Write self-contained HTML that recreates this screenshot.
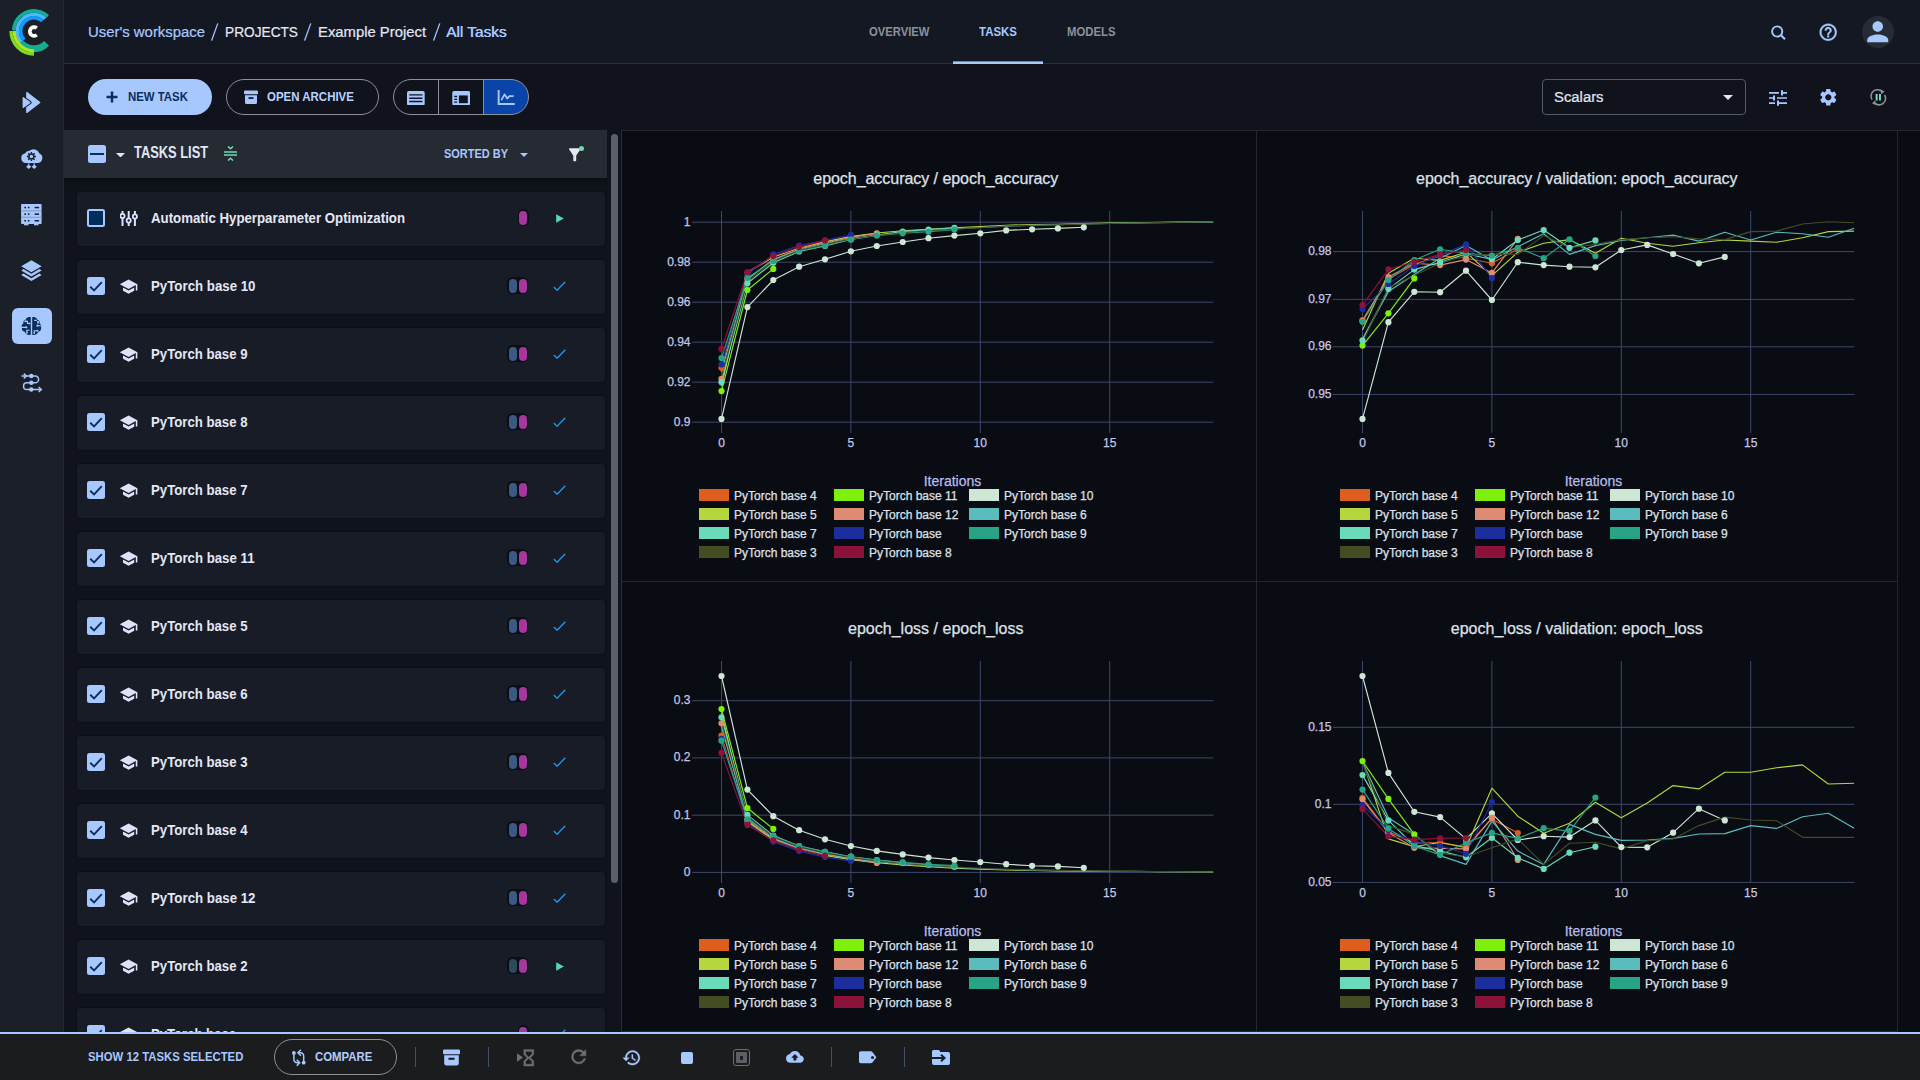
<!DOCTYPE html>
<html><head><meta charset="utf-8"><title>ClearML</title><style>html,body{margin:0;padding:0;background:#10131c;}
body{width:1920px;height:1080px;position:relative;overflow:hidden;font-family:"Liberation Sans",sans-serif;}
.abs{position:absolute;display:block}
.t{position:absolute;white-space:nowrap;}
.sw{position:absolute;width:30px;height:12px}
</style></head><body>
<div class="abs" style="left:64px;top:0px;width:1856px;height:64px;background:#141822"></div>
<div class="abs" style="left:64px;top:63px;width:1856px;height:1px;background:#2a2e39"></div>
<div class="abs" style="left:0px;top:0px;width:64px;height:1080px;background:#1b1f28"></div>
<div class="abs" style="left:63px;top:0px;width:1px;height:1080px;background:#232731"></div>
<div class="abs" style="left:621px;top:130px;width:1299px;height:902px;background:#0a0c14"></div>
<div class="abs" style="left:621px;top:130px;width:1299px;height:1px;background:#242731"></div>
<div class="abs" style="left:621px;top:130px;width:1px;height:902px;background:#2a2d39"></div>
<div class="abs" style="left:1256px;top:130px;width:1px;height:902px;background:#23262f"></div>
<div class="abs" style="left:1897px;top:130px;width:1px;height:902px;background:#23262f"></div>
<div class="abs" style="left:621px;top:581px;width:1276px;height:1px;background:#23262f"></div>
<div class="abs" style="left:621px;top:1031px;width:1276px;height:1px;background:#23262f"></div>
<svg class="abs" style="left:0;top:0" width="64" height="64" viewBox="0 0 64 64"><path d="M47.68 16.33A20.2 20.2 0 0 0 13.71 30.40" stroke="#14ad8f" stroke-width="3.6" fill="none"/><path d="M21.03 43.10A17.6 17.6 0 0 0 46.56 43.33" stroke="#14ad8f" stroke-width="7.0" fill="none"/><path d="M45.07 18.69A16.7 16.7 0 0 0 21.49 42.27" stroke="#4db8ff" stroke-width="3.4" fill="none"/><path d="M42.45 20.91A13.3 13.3 0 0 0 24.02 40.00" stroke="#0f9bff" stroke-width="3.6" fill="none"/><path d="M11.00 31.10A22.9 22.9 0 0 0 33.90 54.00" stroke="#7ddc1f" stroke-width="3.3" fill="none"/><path d="M14.20 31.10A19.7 19.7 0 0 0 33.90 50.80" stroke="#b0e61e" stroke-width="3.2" fill="none"/><path d="M36.75 28.11A4.3 4.3 0 1 0 36.75 34.89" stroke="#ffffff" stroke-width="3.7" fill="none"/></svg>
<svg class="abs" style="left:0;top:64px" width="64" height="360" viewBox="0 64 64 360"><path d="M26.8 92.6L39.8 102.5 26.8 112.4z" fill="#a6c8ff" stroke="#a6c8ff" stroke-width="1.2" stroke-linejoin="round"/><path d="M23.1 97.4L30.3 102.5 23.1 107.7z" fill="#a6c8ff" stroke="#1b1f28" stroke-width="2.800" stroke-linejoin="round" paint-order="stroke"/><path d="M23.1 97.4L30.3 102.5 23.1 107.7z" fill="#a6c8ff" stroke="#a6c8ff" stroke-width="1" stroke-linejoin="round"/><path d="M26 163a4.900 4.900 0 0 1-.800-9.700 4.300 4.300 0 0 1 4.200-2.500 6.400 6.400 0 0 1 10.100 2.700 5 5 0 0 1-2 9.500z" fill="#a6c8ff"/><circle cx="31.400" cy="156.500" r="2.500" fill="#a6c8ff" stroke="#1b1f28" stroke-width="1.500"/><path d="M31.400 152v1.600M31.400 159.400v1.600M26.900 156.500h1.600M34.300 156.500h1.600M28.200 153.300l1.200 1.200M33.400 158.500l1.200 1.200M28.200 159.700l1.200-1.200M33.400 154.500l1.200-1.200" stroke="#1b1f28" stroke-width="1.400"/><path d="M28.700 163.200v1.500M34.200 163.200v1.500" stroke="#a6c8ff" stroke-width="1.200"/><path d="M28.700 164.400l2.600 2.300-2.600 2.300-2.600-2.300zM34.200 164.400l2.600 2.300-2.600 2.300-2.600-2.300z" fill="#a6c8ff"/><rect x="21.100" y="204" width="20.500" height="20" rx="0.800" fill="#a6c8ff"/><path d="M21.100 210.800h20.500M21.100 217.300h20.500" stroke="#7696cf" stroke-width="0.900"/><rect x="24.300" y="206.8" width="1.700" height="1.500" fill="#1b1f28"/><rect x="27.800" y="206.8" width="1.700" height="1.500" fill="#1b1f28"/><rect x="34.600" y="206.8" width="4.500" height="1.500" fill="#1b1f28"/><rect x="24.300" y="213.4" width="1.700" height="1.500" fill="#1b1f28"/><rect x="27.800" y="213.4" width="1.700" height="1.500" fill="#1b1f28"/><rect x="34.600" y="213.4" width="4.500" height="1.500" fill="#1b1f28"/><rect x="24.300" y="220" width="1.700" height="1.500" fill="#1b1f28"/><rect x="27.800" y="220" width="1.700" height="1.500" fill="#1b1f28"/><rect x="34.600" y="220" width="4.500" height="1.500" fill="#1b1f28"/><rect x="24" y="224" width="4.500" height="1.300" fill="#a6c8ff"/><rect x="34" y="224" width="4.500" height="1.300" fill="#a6c8ff"/><path d="M21.200 266.300L31.400 260.200 41.700 266.300 31.400 272.300z" fill="#a6c8ff"/><path d="M21.200 270.500l2.300-1.400 7.900 4.700 7.900-4.700 2.400 1.400-10.300 6.100z" fill="#a6c8ff"/><path d="M21.200 274.900l2.300-1.400 7.900 4.700 7.900-4.700 2.400 1.400-10.300 6.100z" fill="#a6c8ff"/><rect x="12" y="308" width="40" height="36" rx="6" fill="#a6c8ff"/><path d="M30.800 317.300c-2.300-.900-4.500.300-4.900 2.200-1.900.300-3 2.100-2.500 3.900-1.700 1-2.300 2.600-1.400 4.200-.700 2.100.600 4 2.700 4.200.600 2.400 3.700 3.900 6.100 2.900z" fill="#0b2f5c"/><path d="M32.200 317.300c2.300-.900 4.500.300 4.900 2.200 1.900.300 3 2.100 2.500 3.900 1.700 1 2.300 2.600 1.400 4.200.700 2.100-.600 4-2.700 4.200-.600 2.400-3.700 3.900-6.100 2.900z" fill="#0b2f5c"/><path d="M21 327.300h5M25.500 321.300h2v2.200h1.800M26.800 332.500v-2.300h2.600M42 325.700h-4.300M38 322v1.800M36.800 320.300h-2.600M37.200 330.700h-3v2.200" stroke="#a6c8ff" stroke-width="1.150" fill="none"/><g fill="#a6c8ff"><circle cx="26.300" cy="327.300" r="1.100"/><circle cx="25.300" cy="321.300" r="1"/><circle cx="29.500" cy="323.500" r="1"/><circle cx="26.800" cy="332.800" r="1"/><circle cx="37.500" cy="325.700" r="1.100"/><circle cx="38" cy="321.700" r="1"/><circle cx="37.400" cy="330.700" r="1"/><circle cx="34.200" cy="333.100" r="0.900"/></g><path d="M21.500 376h13.700a3.400 3.400 0 0 1 0 6.800h-8.300a3.350 3.350 0 0 0 0 6.700h13.500" stroke="#a6c8ff" stroke-width="1.500" fill="none"/><circle cx="31.300" cy="376" r="2.200" fill="#a6c8ff"/><circle cx="31.300" cy="382.800" r="2.200" fill="#a6c8ff"/><circle cx="31.300" cy="389.500" r="2.200" fill="#a6c8ff"/><path d="M23.800 373.600l2.600 2.400-2.600 2.400M38.700 387.100l2.600 2.400-2.600 2.400" stroke="#a6c8ff" stroke-width="1.500" fill="none"/></svg>
<div class="t" style="left:88px;top:21.0px;font-size:15.5px;line-height:22px;color:#a6c8ff;transform-origin:0 50%;transform:scaleX(0.9604);-webkit-text-stroke:0.22px currentColor;">User's workspace</div>
<svg class="abs" style="left:211.2px;top:22px" width="9" height="20" viewBox="0 0 9 20"><path d="M0.600 18.600L6.800 1.400" stroke="#a3c4fb" stroke-width="1.300"/></svg>
<svg class="abs" style="left:304.2px;top:22px" width="9" height="20" viewBox="0 0 9 20"><path d="M0.600 18.600L6.800 1.400" stroke="#a3c4fb" stroke-width="1.300"/></svg>
<svg class="abs" style="left:432.7px;top:22px" width="9" height="20" viewBox="0 0 9 20"><path d="M0.600 18.600L6.800 1.400" stroke="#a3c4fb" stroke-width="1.300"/></svg>
<div class="t" style="left:225px;top:21.0px;font-size:15.5px;line-height:22px;color:#e2e6f5;transform-origin:0 50%;transform:scaleX(0.8830);-webkit-text-stroke:0.22px currentColor;">PROJECTS</div>
<div class="t" style="left:318px;top:21.0px;font-size:15.5px;line-height:22px;color:#e2e6f5;transform-origin:0 50%;transform:scaleX(0.9570);-webkit-text-stroke:0.22px currentColor;">Example Project</div>
<div class="t" style="left:446px;top:21.0px;font-size:15.5px;line-height:22px;color:#a6c8ff;transform-origin:0 50%;transform:scaleX(0.9939);text-shadow:0.4px 0 0 #a6c8ff;">All Tasks</div>
<div class="t" style="left:868.5px;top:23.5px;font-size:12.2px;line-height:17px;color:#8d9099;font-weight:700;transform-origin:0 50%;transform:scaleX(0.9232);">OVERVIEW</div>
<div class="t" style="left:979px;top:23.5px;font-size:12.2px;line-height:17px;color:#a6c8ff;font-weight:700;transform-origin:0 50%;transform:scaleX(0.9396);">TASKS</div>
<div class="t" style="left:1067px;top:23.5px;font-size:12.2px;line-height:17px;color:#8d9099;font-weight:700;transform-origin:0 50%;transform:scaleX(0.9293);">MODELS</div>
<div class="abs" style="left:953px;top:61px;width:90px;height:1px;background:#6f86ad"></div>
<div class="abs" style="left:953px;top:62px;width:90px;height:2px;background:#a6c8ff"></div>
<svg class="abs" style="left:1770.00px;top:24.00px" width="17" height="17" viewBox="1770 24 17 17" ><circle cx="1777.200" cy="31.500" r="5.100" fill="none" stroke="#a6c8ff" stroke-width="1.900"/><path d="M1781 35.300l4 4" stroke="#a6c8ff" stroke-width="2.100"/></svg>
<svg class="abs" style="left:1817.80px;top:22.20px;" width="20.4" height="20.4" viewBox="0 0 24 24" fill="#a6c8ff" stroke="#a6c8ff" stroke-width="0.450"><path d="M11 18h2v-2h-2v2zm1-16C6.48 2 2 6.48 2 12s4.48 10 10 10 10-4.48 10-10S17.52 2 12 2zm0 18c-4.41 0-8-3.59-8-8s3.59-8 8-8 8 3.59 8 8-3.59 8-8 8zm0-14c-2.21 0-4 1.79-4 4h2c0-1.1.9-2 2-2s2 .9 2 2c0 2-3 1.75-3 5h2c0-2.25 3-2.5 3-5 0-2.21-1.79-4-4-4z"/></svg>
<div class="abs" style="left:1862px;top:16px;width:32px;height:32px;background:#272b35;border-radius:50%"></div>
<svg class="abs" style="left:1862.25px;top:15.75px;" width="31.5" height="31.5" viewBox="0 0 24 24" fill="#a6c8ff" ><path d="M12 12c2.21 0 4-1.79 4-4s-1.79-4-4-4-4 1.79-4 4 1.79 4 4 4zm0 2c-2.67 0-8 1.34-8 4v2h16v-2c0-2.66-5.33-4-8-4z"/></svg>
<div class="abs" style="left:88px;top:79px;width:124px;height:36px;background:#a6c8ff;border-radius:18px"></div>
<svg class="abs" style="left:106.00px;top:91.00px" width="12" height="12" viewBox="0 0 12 12" ><path d="M6 0.500v11M0.500 6h11" stroke="#0b2f5c" stroke-width="2.500"/></svg>
<div class="t" style="left:128px;top:88.5px;font-size:12.2px;line-height:17px;color:#0b2f5c;font-weight:700;transform-origin:0 50%;transform:scaleX(0.9352);">NEW TASK</div>
<div class="abs" style="left:226px;top:79px;width:153px;height:36px;border:1px solid #8e9099;border-radius:18px;box-sizing:border-box"></div>
<svg class="abs" style="left:244.00px;top:90.00px" width="14" height="15" viewBox="0 0 14 15" ><rect x="0" y="0.500" width="14" height="3.800" rx="0.800" fill="#a6c8ff"/><path d="M1 5.200h12v7.300a1.500 1.500 0 0 1-1.500 1.500h-9a1.500 1.500 0 0 1-1.500-1.500z" fill="#a6c8ff"/><rect x="4.500" y="7.200" width="5" height="1.700" fill="#10131c"/></svg>
<div class="t" style="left:267px;top:88.5px;font-size:12.2px;line-height:17px;color:#b9d3ff;font-weight:700;transform-origin:0 50%;transform:scaleX(0.9414);">OPEN ARCHIVE</div>
<div class="abs" style="left:393px;top:79px;width:136px;height:36px;border:1px solid #8e9099;border-radius:18px;box-sizing:border-box;overflow:hidden;background:linear-gradient(90deg,transparent 0 44.500px,#8e9099 44.500px 45.500px,transparent 45.500px 89.500px,#8e9099 89.500px 90.500px,#0b44a8 90.500px)"></div>
<svg class="abs" style="left:407.35px;top:90.60px" width="17.7" height="14.4" viewBox="0 0 16 13" ><rect x="0" y="0" width="16" height="13" rx="1.500" fill="#a6c8ff"/><path d="M2 3.500h12M2 6.500h12M2 9.500h12" stroke="#10131c" stroke-width="1.300"/></svg>
<svg class="abs" style="left:451.75px;top:90.60px" width="18.3" height="14.4" viewBox="0 0 16 13" ><rect x="0" y="0" width="16" height="13" rx="1.500" fill="#a6c8ff"/><rect x="6" y="4" width="8" height="7" fill="#10131c"/><path d="M1.800 5h2.600M1.800 7.500h2.600M1.800 10h2.600" stroke="#10131c" stroke-width="1.200"/></svg>
<svg class="abs" style="left:496.75px;top:90.00px" width="18.3" height="15" viewBox="0 0 16 14" ><path d="M1 0v13h15" stroke="#a6c8ff" stroke-width="1.800" fill="none"/><path d="M3.500 9.500l3-5.500 2.500 4 2-2.300h4" stroke="#a6c8ff" stroke-width="1.600" fill="none" stroke-linejoin="round"/></svg>
<div class="abs" style="left:1542px;top:79px;width:204px;height:36px;border:1px solid #555a66;border-radius:4px;box-sizing:border-box"></div>
<div class="t" style="left:1553.5px;top:86.0px;font-size:15.5px;line-height:22px;color:#e2e6f5;transform-origin:0 50%;transform:scaleX(0.9577);-webkit-text-stroke:0.22px currentColor;">Scalars</div>
<svg class="abs" style="left:1723.00px;top:95.00px" width="10" height="5" viewBox="0 0 10 5" ><path d="M0 0h10L5 5z" fill="#e2e6f5"/></svg>
<svg class="abs" style="left:1766.00px;top:85.70px;transform:scaleY(0.86);" width="24" height="24" viewBox="0 0 24 24" fill="#a6c8ff" ><path d="M3 17v2h6v-2H3zM3 5v2h10V5H3zm10 16v-2h8v-2h-8v-2h-2v6h2zM7 9v2H3v2h4v2h2V9H7zm14 4v-2H11v2h10zm-6-4h2V7h4V5h-4V3h-2v6z"/></svg>
<svg class="abs" style="left:1817.70px;top:87.20px;" width="20.6" height="20.6" viewBox="0 0 24 24" fill="#a6c8ff" ><path d="M19.14 12.94c.04-.3.06-.61.06-.94 0-.32-.02-.64-.07-.94l2.03-1.58c.18-.14.23-.41.12-.61l-1.92-3.32c-.12-.22-.37-.29-.59-.22l-2.39.96c-.5-.38-1.03-.7-1.62-.94l-.36-2.54c-.04-.24-.24-.41-.48-.41h-3.84c-.24 0-.43.17-.47.41l-.36 2.54c-.59.24-1.13.57-1.62.94l-2.39-.96c-.22-.08-.47 0-.59.22L2.74 8.87c-.12.21-.08.47.12.61l2.03 1.58c-.05.3-.09.63-.09.94s.02.64.07.94l-2.03 1.58c-.18.14-.23.41-.12.61l1.92 3.32c.12.22.37.29.59.22l2.39-.96c.5.38 1.03.7 1.62.94l.36 2.54c.05.24.24.41.48.41h3.84c.24 0 .44-.17.47-.41l.36-2.54c.59-.24 1.13-.56 1.62-.94l2.39.96c.22.08.47 0 .59-.22l1.92-3.32c.12-.22.07-.47-.12-.61l-2.01-1.58zM12 15.6c-1.98 0-3.6-1.62-3.6-3.6s1.62-3.6 3.6-3.6 3.6 1.62 3.6 3.6-1.62 3.6-3.6 3.6z"/></svg>
<svg class="abs" style="left:1868.70px;top:87.90px" width="18.6" height="18.6" viewBox="0 0 20 20" ><path d="M3.200 12.500A7 7 0 0 1 14.500 4.300M16.800 7.500A7 7 0 0 1 5.500 15.700" stroke="#8e9099" stroke-width="1.700" fill="none"/><path d="M12.500 1.500l4.300 2.200-3.600 3zM7.500 18.500l-4.300-2.200 3.600-3z" fill="#8e9099"/><path d="M8.200 6.500v7M11.800 6.500v7" stroke="#7fe3c1" stroke-width="2"/></svg>
<div class="abs" style="left:64px;top:130px;width:543px;height:48px;background:#262a33"></div>
<div class="abs" style="left:64px;top:178px;width:543px;height:10px;background:linear-gradient(#0c0e15,#10131c)"></div>
<div class="abs" style="left:88px;top:145px;width:18px;height:18px;background:#a6c8ff;border-radius:2.500px"></div>
<div class="abs" style="left:90px;top:153px;width:14px;height:2.2px;background:#0b2f5c"></div>
<svg class="abs" style="left:115.50px;top:152.75px" width="9" height="4.5" viewBox="0 0 10 5" ><path d="M0 0h10L5 5z" fill="#dce6ff"/></svg>
<div class="t" style="left:133.8px;top:142.2px;font-size:15.7px;line-height:22px;color:#e2e6f5;font-weight:700;transform-origin:0 50%;transform:scaleX(0.8206);">TASKS LIST</div>
<svg class="abs" style="left:224.00px;top:146.00px" width="13" height="15" viewBox="0 0 13 15" ><path d="M0 6h13M0 9h13" stroke="#6fdbb5" stroke-width="1.500"/><path d="M4 0.500l2.500 2.300L9 .500M4 14.500l2.500-2.300 2.500 2.300" stroke="#6fdbb5" stroke-width="1.500" fill="none"/></svg>
<div class="t" style="left:443.5px;top:145.5px;font-size:12.2px;line-height:17px;color:#a6c8ff;font-weight:700;transform-origin:0 50%;transform:scaleX(0.8992);">SORTED BY</div>
<svg class="abs" style="left:519.50px;top:153.00px" width="8" height="4" viewBox="0 0 10 5" ><path d="M0 0h10L5 5z" fill="#a6c8ff"/></svg>
<svg class="abs" style="left:566.25px;top:145.75px;transform:scaleY(1.13);" width="17.5" height="17.5" viewBox="0 0 24 24" fill="#e6e8f0" ><path d="M4.25 5.61C6.27 8.2 10 13 10 13v6c0 .55.45 1 1 1h2c.55 0 1-.45 1-1v-6s3.72-4.8 5.74-7.39A.998.998 0 0018.95 4H5.04c-.83 0-1.3.95-.79 1.61z"/></svg>
<div class="abs" style="left:579px;top:146px;width:5px;height:5px;background:#6fdbb5;border-radius:50%"></div>
<div class="abs" style="left:611px;top:134px;width:6.5px;height:749px;background:#5b5f69;border-radius:3.500px"></div>
<div class="abs" style="left:64px;top:188px;width:548px;height:844px;overflow:hidden"><div class="abs" style="left:-64px;top:-188px;width:700px;height:1100px">
<div class="abs" style="left:76px;top:191.0px;width:530px;height:56px;background:#171c27;border:1px solid #0c0f17;box-sizing:border-box;border-radius:4px"></div>
<div class="abs" style="left:87px;top:209.0px;width:18px;height:18px;border:2px solid #a6c8ff;background:#002d5c;border-radius:2.500px;box-sizing:border-box"></div>
<svg class="abs" style="left:120.30px;top:210.75px" width="17.4" height="15.5" viewBox="0 0 17.400 15.500" ><path d="M2.5 0v15.500" stroke="#dce4ff" stroke-width="2"/><circle cx="2.5" cy="5" r="2.100" fill="#181c26" stroke="#dce4ff" stroke-width="1.800"/><path d="M8.7 0v15.500" stroke="#dce4ff" stroke-width="2"/><circle cx="8.7" cy="9.5" r="2.100" fill="#181c26" stroke="#dce4ff" stroke-width="1.800"/><path d="M14.9 0v15.500" stroke="#dce4ff" stroke-width="2"/><circle cx="14.9" cy="5.5" r="2.100" fill="#181c26" stroke="#dce4ff" stroke-width="1.800"/></svg>
<div class="t" style="left:151px;top:208.0px;font-size:14.5px;line-height:20px;color:#e4e7f6;font-weight:700;transform-origin:0 50%;transform:scaleX(0.9138);">Automatic Hyperparameter Optimization</div>
<div class="abs" style="left:517.5px;top:209.3px;width:11px;height:17.2px;background:#0c0e15;border-radius:5.500px"></div>
<div class="abs" style="left:518.9px;top:210.70000000000002px;width:8.2px;height:14.4px;background:#a5379f;border-radius:4.100px"></div>
<svg class="abs" style="left:555.60px;top:213.50px" width="8" height="9" viewBox="0 0 8 9" ><path d="M0.200 0.300v8.400L7.800 4.500z" fill="#4fdcb0"/></svg>
<div class="abs" style="left:76px;top:259.0px;width:530px;height:56px;background:#171c27;border:1px solid #0c0f17;box-sizing:border-box;border-radius:4px"></div>
<div class="abs" style="left:87px;top:277.0px;width:18px;height:18px;background:#a6c8ff;border-radius:2.500px"></div>
<svg class="abs" style="left:88.90px;top:280.70px" width="14" height="11" viewBox="0 0 14 11" ><path d="M1.200 5.800l3.900 3.600L12.800 1.200" stroke="#0b2f5c" stroke-width="1.900" fill="none"/></svg>
<svg class="abs" style="left:119.10px;top:277.10px;" width="19.2" height="19.2" viewBox="0 0 24 24" fill="#dde2f8" ><path d="M5 13.18v4L12 21l7-3.82v-4L12 17l-7-3.82zM12 3L1 9l11 6 9-4.91V17h2V9L12 3z"/></svg>
<div class="t" style="left:151px;top:276.0px;font-size:14.5px;line-height:20px;color:#e4e7f6;font-weight:700;transform-origin:0 50%;transform:scaleX(0.9153);">PyTorch base 10</div>
<div class="abs" style="left:507.4px;top:277.29999999999995px;width:21.1px;height:17.2px;background:#0c0e15;border-radius:5.500px"></div>
<div class="abs" style="left:508.8px;top:278.7px;width:8.2px;height:14.4px;background:#3b5a82;border-radius:4.100px"></div>
<div class="abs" style="left:518.9px;top:278.7px;width:8.2px;height:14.4px;background:#a5379f;border-radius:4.100px"></div>
<svg class="abs" style="left:553.00px;top:280.50px" width="13" height="10" viewBox="0 0 13 10" ><path d="M0.800 6l3.300 3.200L12.300 0.800" stroke="#1e9bf0" stroke-width="1.300" fill="none"/></svg>
<div class="abs" style="left:76px;top:327.0px;width:530px;height:56px;background:#171c27;border:1px solid #0c0f17;box-sizing:border-box;border-radius:4px"></div>
<div class="abs" style="left:87px;top:345.0px;width:18px;height:18px;background:#a6c8ff;border-radius:2.500px"></div>
<svg class="abs" style="left:88.90px;top:348.70px" width="14" height="11" viewBox="0 0 14 11" ><path d="M1.200 5.800l3.900 3.600L12.800 1.200" stroke="#0b2f5c" stroke-width="1.900" fill="none"/></svg>
<svg class="abs" style="left:119.10px;top:345.10px;" width="19.2" height="19.2" viewBox="0 0 24 24" fill="#dde2f8" ><path d="M5 13.18v4L12 21l7-3.82v-4L12 17l-7-3.82zM12 3L1 9l11 6 9-4.91V17h2V9L12 3z"/></svg>
<div class="t" style="left:151px;top:344.0px;font-size:14.5px;line-height:20px;color:#e4e7f6;font-weight:700;transform-origin:0 50%;transform:scaleX(0.9094);">PyTorch base 9</div>
<div class="abs" style="left:507.4px;top:345.29999999999995px;width:21.1px;height:17.2px;background:#0c0e15;border-radius:5.500px"></div>
<div class="abs" style="left:508.8px;top:346.7px;width:8.2px;height:14.4px;background:#3b5a82;border-radius:4.100px"></div>
<div class="abs" style="left:518.9px;top:346.7px;width:8.2px;height:14.4px;background:#a5379f;border-radius:4.100px"></div>
<svg class="abs" style="left:553.00px;top:348.50px" width="13" height="10" viewBox="0 0 13 10" ><path d="M0.800 6l3.300 3.200L12.300 0.800" stroke="#1e9bf0" stroke-width="1.300" fill="none"/></svg>
<div class="abs" style="left:76px;top:395.0px;width:530px;height:56px;background:#171c27;border:1px solid #0c0f17;box-sizing:border-box;border-radius:4px"></div>
<div class="abs" style="left:87px;top:413.0px;width:18px;height:18px;background:#a6c8ff;border-radius:2.500px"></div>
<svg class="abs" style="left:88.90px;top:416.70px" width="14" height="11" viewBox="0 0 14 11" ><path d="M1.200 5.800l3.900 3.600L12.800 1.200" stroke="#0b2f5c" stroke-width="1.900" fill="none"/></svg>
<svg class="abs" style="left:119.10px;top:413.10px;" width="19.2" height="19.2" viewBox="0 0 24 24" fill="#dde2f8" ><path d="M5 13.18v4L12 21l7-3.82v-4L12 17l-7-3.82zM12 3L1 9l11 6 9-4.91V17h2V9L12 3z"/></svg>
<div class="t" style="left:151px;top:412.0px;font-size:14.5px;line-height:20px;color:#e4e7f6;font-weight:700;transform-origin:0 50%;transform:scaleX(0.9094);">PyTorch base 8</div>
<div class="abs" style="left:507.4px;top:413.29999999999995px;width:21.1px;height:17.2px;background:#0c0e15;border-radius:5.500px"></div>
<div class="abs" style="left:508.8px;top:414.7px;width:8.2px;height:14.4px;background:#3b5a82;border-radius:4.100px"></div>
<div class="abs" style="left:518.9px;top:414.7px;width:8.2px;height:14.4px;background:#a5379f;border-radius:4.100px"></div>
<svg class="abs" style="left:553.00px;top:416.50px" width="13" height="10" viewBox="0 0 13 10" ><path d="M0.800 6l3.300 3.200L12.300 0.800" stroke="#1e9bf0" stroke-width="1.300" fill="none"/></svg>
<div class="abs" style="left:76px;top:463.0px;width:530px;height:56px;background:#171c27;border:1px solid #0c0f17;box-sizing:border-box;border-radius:4px"></div>
<div class="abs" style="left:87px;top:481.0px;width:18px;height:18px;background:#a6c8ff;border-radius:2.500px"></div>
<svg class="abs" style="left:88.90px;top:484.70px" width="14" height="11" viewBox="0 0 14 11" ><path d="M1.200 5.800l3.900 3.600L12.800 1.200" stroke="#0b2f5c" stroke-width="1.900" fill="none"/></svg>
<svg class="abs" style="left:119.10px;top:481.10px;" width="19.2" height="19.2" viewBox="0 0 24 24" fill="#dde2f8" ><path d="M5 13.18v4L12 21l7-3.82v-4L12 17l-7-3.82zM12 3L1 9l11 6 9-4.91V17h2V9L12 3z"/></svg>
<div class="t" style="left:151px;top:480.0px;font-size:14.5px;line-height:20px;color:#e4e7f6;font-weight:700;transform-origin:0 50%;transform:scaleX(0.9094);">PyTorch base 7</div>
<div class="abs" style="left:507.4px;top:481.29999999999995px;width:21.1px;height:17.2px;background:#0c0e15;border-radius:5.500px"></div>
<div class="abs" style="left:508.8px;top:482.7px;width:8.2px;height:14.4px;background:#3b5a82;border-radius:4.100px"></div>
<div class="abs" style="left:518.9px;top:482.7px;width:8.2px;height:14.4px;background:#a5379f;border-radius:4.100px"></div>
<svg class="abs" style="left:553.00px;top:484.50px" width="13" height="10" viewBox="0 0 13 10" ><path d="M0.800 6l3.300 3.200L12.300 0.800" stroke="#1e9bf0" stroke-width="1.300" fill="none"/></svg>
<div class="abs" style="left:76px;top:531.0px;width:530px;height:56px;background:#171c27;border:1px solid #0c0f17;box-sizing:border-box;border-radius:4px"></div>
<div class="abs" style="left:87px;top:549.0px;width:18px;height:18px;background:#a6c8ff;border-radius:2.500px"></div>
<svg class="abs" style="left:88.90px;top:552.70px" width="14" height="11" viewBox="0 0 14 11" ><path d="M1.200 5.800l3.900 3.600L12.800 1.200" stroke="#0b2f5c" stroke-width="1.900" fill="none"/></svg>
<svg class="abs" style="left:119.10px;top:549.10px;" width="19.2" height="19.2" viewBox="0 0 24 24" fill="#dde2f8" ><path d="M5 13.18v4L12 21l7-3.82v-4L12 17l-7-3.82zM12 3L1 9l11 6 9-4.91V17h2V9L12 3z"/></svg>
<div class="t" style="left:151px;top:548.0px;font-size:14.5px;line-height:20px;color:#e4e7f6;font-weight:700;transform-origin:0 50%;transform:scaleX(0.9129);">PyTorch base 11</div>
<div class="abs" style="left:507.4px;top:549.3px;width:21.1px;height:17.2px;background:#0c0e15;border-radius:5.500px"></div>
<div class="abs" style="left:508.8px;top:550.6999999999999px;width:8.2px;height:14.4px;background:#3b5a82;border-radius:4.100px"></div>
<div class="abs" style="left:518.9px;top:550.6999999999999px;width:8.2px;height:14.4px;background:#a5379f;border-radius:4.100px"></div>
<svg class="abs" style="left:553.00px;top:552.50px" width="13" height="10" viewBox="0 0 13 10" ><path d="M0.800 6l3.300 3.200L12.300 0.800" stroke="#1e9bf0" stroke-width="1.300" fill="none"/></svg>
<div class="abs" style="left:76px;top:599.0px;width:530px;height:56px;background:#171c27;border:1px solid #0c0f17;box-sizing:border-box;border-radius:4px"></div>
<div class="abs" style="left:87px;top:617.0px;width:18px;height:18px;background:#a6c8ff;border-radius:2.500px"></div>
<svg class="abs" style="left:88.90px;top:620.70px" width="14" height="11" viewBox="0 0 14 11" ><path d="M1.200 5.800l3.900 3.600L12.800 1.200" stroke="#0b2f5c" stroke-width="1.900" fill="none"/></svg>
<svg class="abs" style="left:119.10px;top:617.10px;" width="19.2" height="19.2" viewBox="0 0 24 24" fill="#dde2f8" ><path d="M5 13.18v4L12 21l7-3.82v-4L12 17l-7-3.82zM12 3L1 9l11 6 9-4.91V17h2V9L12 3z"/></svg>
<div class="t" style="left:151px;top:616.0px;font-size:14.5px;line-height:20px;color:#e4e7f6;font-weight:700;transform-origin:0 50%;transform:scaleX(0.9094);">PyTorch base 5</div>
<div class="abs" style="left:507.4px;top:617.3px;width:21.1px;height:17.2px;background:#0c0e15;border-radius:5.500px"></div>
<div class="abs" style="left:508.8px;top:618.6999999999999px;width:8.2px;height:14.4px;background:#3b5a82;border-radius:4.100px"></div>
<div class="abs" style="left:518.9px;top:618.6999999999999px;width:8.2px;height:14.4px;background:#a5379f;border-radius:4.100px"></div>
<svg class="abs" style="left:553.00px;top:620.50px" width="13" height="10" viewBox="0 0 13 10" ><path d="M0.800 6l3.300 3.200L12.300 0.800" stroke="#1e9bf0" stroke-width="1.300" fill="none"/></svg>
<div class="abs" style="left:76px;top:667.0px;width:530px;height:56px;background:#171c27;border:1px solid #0c0f17;box-sizing:border-box;border-radius:4px"></div>
<div class="abs" style="left:87px;top:685.0px;width:18px;height:18px;background:#a6c8ff;border-radius:2.500px"></div>
<svg class="abs" style="left:88.90px;top:688.70px" width="14" height="11" viewBox="0 0 14 11" ><path d="M1.200 5.800l3.900 3.600L12.800 1.200" stroke="#0b2f5c" stroke-width="1.900" fill="none"/></svg>
<svg class="abs" style="left:119.10px;top:685.10px;" width="19.2" height="19.2" viewBox="0 0 24 24" fill="#dde2f8" ><path d="M5 13.18v4L12 21l7-3.82v-4L12 17l-7-3.82zM12 3L1 9l11 6 9-4.91V17h2V9L12 3z"/></svg>
<div class="t" style="left:151px;top:684.0px;font-size:14.5px;line-height:20px;color:#e4e7f6;font-weight:700;transform-origin:0 50%;transform:scaleX(0.9094);">PyTorch base 6</div>
<div class="abs" style="left:507.4px;top:685.3px;width:21.1px;height:17.2px;background:#0c0e15;border-radius:5.500px"></div>
<div class="abs" style="left:508.8px;top:686.6999999999999px;width:8.2px;height:14.4px;background:#3b5a82;border-radius:4.100px"></div>
<div class="abs" style="left:518.9px;top:686.6999999999999px;width:8.2px;height:14.4px;background:#a5379f;border-radius:4.100px"></div>
<svg class="abs" style="left:553.00px;top:688.50px" width="13" height="10" viewBox="0 0 13 10" ><path d="M0.800 6l3.300 3.200L12.300 0.800" stroke="#1e9bf0" stroke-width="1.300" fill="none"/></svg>
<div class="abs" style="left:76px;top:735.0px;width:530px;height:56px;background:#171c27;border:1px solid #0c0f17;box-sizing:border-box;border-radius:4px"></div>
<div class="abs" style="left:87px;top:753.0px;width:18px;height:18px;background:#a6c8ff;border-radius:2.500px"></div>
<svg class="abs" style="left:88.90px;top:756.70px" width="14" height="11" viewBox="0 0 14 11" ><path d="M1.200 5.800l3.900 3.600L12.800 1.200" stroke="#0b2f5c" stroke-width="1.900" fill="none"/></svg>
<svg class="abs" style="left:119.10px;top:753.10px;" width="19.2" height="19.2" viewBox="0 0 24 24" fill="#dde2f8" ><path d="M5 13.18v4L12 21l7-3.82v-4L12 17l-7-3.82zM12 3L1 9l11 6 9-4.91V17h2V9L12 3z"/></svg>
<div class="t" style="left:151px;top:752.0px;font-size:14.5px;line-height:20px;color:#e4e7f6;font-weight:700;transform-origin:0 50%;transform:scaleX(0.9094);">PyTorch base 3</div>
<div class="abs" style="left:507.4px;top:753.3px;width:21.1px;height:17.2px;background:#0c0e15;border-radius:5.500px"></div>
<div class="abs" style="left:508.8px;top:754.6999999999999px;width:8.2px;height:14.4px;background:#3b5a82;border-radius:4.100px"></div>
<div class="abs" style="left:518.9px;top:754.6999999999999px;width:8.2px;height:14.4px;background:#a5379f;border-radius:4.100px"></div>
<svg class="abs" style="left:553.00px;top:756.50px" width="13" height="10" viewBox="0 0 13 10" ><path d="M0.800 6l3.300 3.200L12.300 0.800" stroke="#1e9bf0" stroke-width="1.300" fill="none"/></svg>
<div class="abs" style="left:76px;top:803.0px;width:530px;height:56px;background:#171c27;border:1px solid #0c0f17;box-sizing:border-box;border-radius:4px"></div>
<div class="abs" style="left:87px;top:821.0px;width:18px;height:18px;background:#a6c8ff;border-radius:2.500px"></div>
<svg class="abs" style="left:88.90px;top:824.70px" width="14" height="11" viewBox="0 0 14 11" ><path d="M1.200 5.800l3.900 3.600L12.800 1.200" stroke="#0b2f5c" stroke-width="1.900" fill="none"/></svg>
<svg class="abs" style="left:119.10px;top:821.10px;" width="19.2" height="19.2" viewBox="0 0 24 24" fill="#dde2f8" ><path d="M5 13.18v4L12 21l7-3.82v-4L12 17l-7-3.82zM12 3L1 9l11 6 9-4.91V17h2V9L12 3z"/></svg>
<div class="t" style="left:151px;top:820.0px;font-size:14.5px;line-height:20px;color:#e4e7f6;font-weight:700;transform-origin:0 50%;transform:scaleX(0.9094);">PyTorch base 4</div>
<div class="abs" style="left:507.4px;top:821.3px;width:21.1px;height:17.2px;background:#0c0e15;border-radius:5.500px"></div>
<div class="abs" style="left:508.8px;top:822.6999999999999px;width:8.2px;height:14.4px;background:#3b5a82;border-radius:4.100px"></div>
<div class="abs" style="left:518.9px;top:822.6999999999999px;width:8.2px;height:14.4px;background:#a5379f;border-radius:4.100px"></div>
<svg class="abs" style="left:553.00px;top:824.50px" width="13" height="10" viewBox="0 0 13 10" ><path d="M0.800 6l3.300 3.200L12.300 0.800" stroke="#1e9bf0" stroke-width="1.300" fill="none"/></svg>
<div class="abs" style="left:76px;top:871.0px;width:530px;height:56px;background:#171c27;border:1px solid #0c0f17;box-sizing:border-box;border-radius:4px"></div>
<div class="abs" style="left:87px;top:889.0px;width:18px;height:18px;background:#a6c8ff;border-radius:2.500px"></div>
<svg class="abs" style="left:88.90px;top:892.70px" width="14" height="11" viewBox="0 0 14 11" ><path d="M1.200 5.800l3.900 3.600L12.800 1.200" stroke="#0b2f5c" stroke-width="1.900" fill="none"/></svg>
<svg class="abs" style="left:119.10px;top:889.10px;" width="19.2" height="19.2" viewBox="0 0 24 24" fill="#dde2f8" ><path d="M5 13.18v4L12 21l7-3.82v-4L12 17l-7-3.82zM12 3L1 9l11 6 9-4.91V17h2V9L12 3z"/></svg>
<div class="t" style="left:151px;top:888.0px;font-size:14.5px;line-height:20px;color:#e4e7f6;font-weight:700;transform-origin:0 50%;transform:scaleX(0.9153);">PyTorch base 12</div>
<div class="abs" style="left:507.4px;top:889.3px;width:21.1px;height:17.2px;background:#0c0e15;border-radius:5.500px"></div>
<div class="abs" style="left:508.8px;top:890.6999999999999px;width:8.2px;height:14.4px;background:#3b5a82;border-radius:4.100px"></div>
<div class="abs" style="left:518.9px;top:890.6999999999999px;width:8.2px;height:14.4px;background:#a5379f;border-radius:4.100px"></div>
<svg class="abs" style="left:553.00px;top:892.50px" width="13" height="10" viewBox="0 0 13 10" ><path d="M0.800 6l3.300 3.200L12.300 0.800" stroke="#1e9bf0" stroke-width="1.300" fill="none"/></svg>
<div class="abs" style="left:76px;top:939.0px;width:530px;height:56px;background:#171c27;border:1px solid #0c0f17;box-sizing:border-box;border-radius:4px"></div>
<div class="abs" style="left:87px;top:957.0px;width:18px;height:18px;background:#a6c8ff;border-radius:2.500px"></div>
<svg class="abs" style="left:88.90px;top:960.70px" width="14" height="11" viewBox="0 0 14 11" ><path d="M1.200 5.800l3.900 3.600L12.800 1.200" stroke="#0b2f5c" stroke-width="1.900" fill="none"/></svg>
<svg class="abs" style="left:119.10px;top:957.10px;" width="19.2" height="19.2" viewBox="0 0 24 24" fill="#dde2f8" ><path d="M5 13.18v4L12 21l7-3.82v-4L12 17l-7-3.82zM12 3L1 9l11 6 9-4.91V17h2V9L12 3z"/></svg>
<div class="t" style="left:151px;top:956.0px;font-size:14.5px;line-height:20px;color:#e4e7f6;font-weight:700;transform-origin:0 50%;transform:scaleX(0.9094);">PyTorch base 2</div>
<div class="abs" style="left:507.4px;top:957.3px;width:21.1px;height:17.2px;background:#0c0e15;border-radius:5.500px"></div>
<div class="abs" style="left:508.8px;top:958.6999999999999px;width:8.2px;height:14.4px;background:#2d4a5c;border-radius:4.100px"></div>
<div class="abs" style="left:518.9px;top:958.6999999999999px;width:8.2px;height:14.4px;background:#a5379f;border-radius:4.100px"></div>
<svg class="abs" style="left:555.60px;top:961.50px" width="8" height="9" viewBox="0 0 8 9" ><path d="M0.200 0.300v8.400L7.800 4.500z" fill="#4fdcb0"/></svg>
<div class="abs" style="left:76px;top:1007.0px;width:530px;height:56px;background:#171c27;border:1px solid #0c0f17;box-sizing:border-box;border-radius:4px"></div>
<div class="abs" style="left:87px;top:1025.0px;width:18px;height:18px;background:#a6c8ff;border-radius:2.500px"></div>
<svg class="abs" style="left:88.90px;top:1028.70px" width="14" height="11" viewBox="0 0 14 11" ><path d="M1.200 5.800l3.900 3.600L12.800 1.200" stroke="#0b2f5c" stroke-width="1.900" fill="none"/></svg>
<svg class="abs" style="left:119.10px;top:1025.10px;" width="19.2" height="19.2" viewBox="0 0 24 24" fill="#dde2f8" ><path d="M5 13.18v4L12 21l7-3.82v-4L12 17l-7-3.82zM12 3L1 9l11 6 9-4.91V17h2V9L12 3z"/></svg>
<div class="t" style="left:151px;top:1024.0px;font-size:14.5px;line-height:20px;color:#e4e7f6;font-weight:700;transform-origin:0 50%;transform:scaleX(0.9041);">PyTorch base</div>
<div class="abs" style="left:517.5px;top:1025.3000000000002px;width:11px;height:17.2px;background:#0c0e15;border-radius:5.500px"></div>
<div class="abs" style="left:518.9px;top:1026.7px;width:8.2px;height:14.4px;background:#a5379f;border-radius:4.100px"></div>
<svg class="abs" style="left:553.00px;top:1028.50px" width="13" height="10" viewBox="0 0 13 10" ><path d="M0.800 6l3.300 3.200L12.300 0.800" stroke="#1e9bf0" stroke-width="1.300" fill="none"/></svg>
</div></div>
<svg class="abs" style="left:0;top:0" width="1920" height="1080" viewBox="0 0 1920 1080"><g stroke="#3f4768" stroke-width="1" fill="none"><path d="M721.5 211V433"/><path d="M850.9 211V433"/><path d="M980.3 211V433"/><path d="M1109.7 211V433"/><path d="M692 222.2H1213.4"/><path d="M692 262.2H1213.4"/><path d="M692 302.2H1213.4"/><path d="M692 342.2H1213.4"/><path d="M692 382.2H1213.4"/><path d="M692 422.2H1213.4"/></g><clipPath id="cl0_0"><rect x="692" y="205" width="521.4000000000001" height="234"/></clipPath><g fill="none" stroke-width="1.15" stroke-linejoin="round" clip-path="url(#cl0_0)"><polyline points="721.5,367.8 747.4,273.0 773.3,257.0 799.1,247.5 825.0,241.5 850.9,236.5 876.8,233.5" stroke="#dd5e1e"/><polyline points="721.5,391.1 747.4,290.0 773.3,268.9" stroke="#7ef00c"/><polyline points="721.5,418.9 747.4,307.1 773.3,280.0 799.1,266.7 825.0,259.3 850.9,251.3 876.8,246.0 902.7,242.0 928.5,238.2 954.4,235.6 980.3,233.3 1006.2,230.4 1032.1,229.3 1057.9,228.4 1083.8,227.3" stroke="#cde6d5"/><polyline points="721.5,386.0 747.4,272.0 773.3,257.0 799.1,248.0 825.0,242.0 850.9,236.5 876.8,233.0 902.7,230.8 928.5,229.3 954.4,227.8 980.3,226.5 1006.2,225.2 1032.1,224.6 1057.9,224.2 1083.8,223.6 1109.7,223.0 1135.6,222.7 1161.5,222.3 1187.3,221.9 1213.2,221.6" stroke="#b5d63c"/><polyline points="721.5,378.9 747.4,279.0 773.3,259.5 799.1,249.0 825.0,243.0 850.9,237.5 876.8,233.3" stroke="#dd8b72"/><polyline points="721.5,372.0 747.4,279.0 773.3,260.0 799.1,250.0 825.0,244.0 850.9,238.5 876.8,235.0 902.7,232.5 928.5,230.5 954.4,229.0 980.3,227.5 1006.2,226.2 1032.1,225.3 1057.9,224.6 1083.8,224.0 1109.7,223.4 1135.6,223.0 1161.5,222.6 1187.3,222.2 1213.2,221.9" stroke="#5abcbc"/><polyline points="721.5,382.2 747.4,283.3 773.3,262.7 799.1,251.5 825.0,246.0 850.9,239.5 876.8,235.0 902.7,231.5 928.5,229.5 954.4,227.8" stroke="#6adbb8"/><polyline points="721.5,364.4 747.4,274.4 773.3,254.4 799.1,245.6 825.0,240.4 850.9,234.9" stroke="#1c2d9e"/><polyline points="721.5,358.0 747.4,277.8 773.3,261.0 799.1,250.7 825.0,245.6 850.9,239.3 876.8,235.6 902.7,233.3 928.5,231.8 954.4,229.6" stroke="#27a385"/><polyline points="721.5,377.0 747.4,281.0 773.3,261.0 799.1,250.5 825.0,244.5 850.9,239.0 876.8,235.5 902.7,232.8 928.5,230.8 954.4,229.2 980.3,227.8 1006.2,226.0 1032.1,225.2 1057.9,224.7 1083.8,224.1 1109.7,223.5 1135.6,223.0 1161.5,222.5 1187.3,222.1 1213.2,221.8" stroke="#424d24"/><polyline points="721.5,348.9 747.4,272.2 773.3,256.0 799.1,247.1 825.0,240.4" stroke="#8c1239"/></g><g fill="#dd5e1e"><circle cx="721.5" cy="367.8" r="3.1"/><circle cx="747.4" cy="273.0" r="3.1"/><circle cx="773.3" cy="257.0" r="3.1"/><circle cx="799.1" cy="247.5" r="3.1"/><circle cx="825.0" cy="241.5" r="3.1"/><circle cx="850.9" cy="236.5" r="3.1"/><circle cx="876.8" cy="233.5" r="3.1"/></g><g fill="#7ef00c"><circle cx="721.5" cy="391.1" r="3.1"/><circle cx="747.4" cy="290.0" r="3.1"/><circle cx="773.3" cy="268.9" r="3.1"/></g><g fill="#cde6d5"><circle cx="721.5" cy="418.9" r="3.1"/><circle cx="747.4" cy="307.1" r="3.1"/><circle cx="773.3" cy="280.0" r="3.1"/><circle cx="799.1" cy="266.7" r="3.1"/><circle cx="825.0" cy="259.3" r="3.1"/><circle cx="850.9" cy="251.3" r="3.1"/><circle cx="876.8" cy="246.0" r="3.1"/><circle cx="902.7" cy="242.0" r="3.1"/><circle cx="928.5" cy="238.2" r="3.1"/><circle cx="954.4" cy="235.6" r="3.1"/><circle cx="980.3" cy="233.3" r="3.1"/><circle cx="1006.2" cy="230.4" r="3.1"/><circle cx="1032.1" cy="229.3" r="3.1"/><circle cx="1057.9" cy="228.4" r="3.1"/><circle cx="1083.8" cy="227.3" r="3.1"/></g><g fill="#dd8b72"><circle cx="721.5" cy="378.9" r="3.1"/><circle cx="747.4" cy="279.0" r="3.1"/><circle cx="773.3" cy="259.5" r="3.1"/><circle cx="799.1" cy="249.0" r="3.1"/><circle cx="825.0" cy="243.0" r="3.1"/><circle cx="850.9" cy="237.5" r="3.1"/><circle cx="876.8" cy="233.3" r="3.1"/></g><g fill="#6adbb8"><circle cx="721.5" cy="382.2" r="3.1"/><circle cx="747.4" cy="283.3" r="3.1"/><circle cx="773.3" cy="262.7" r="3.1"/><circle cx="799.1" cy="251.5" r="3.1"/><circle cx="825.0" cy="246.0" r="3.1"/><circle cx="850.9" cy="239.5" r="3.1"/><circle cx="876.8" cy="235.0" r="3.1"/><circle cx="902.7" cy="231.5" r="3.1"/><circle cx="928.5" cy="229.5" r="3.1"/><circle cx="954.4" cy="227.8" r="3.1"/></g><g fill="#1c2d9e"><circle cx="721.5" cy="364.4" r="3.1"/><circle cx="747.4" cy="274.4" r="3.1"/><circle cx="773.3" cy="254.4" r="3.1"/><circle cx="799.1" cy="245.6" r="3.1"/><circle cx="825.0" cy="240.4" r="3.1"/><circle cx="850.9" cy="234.9" r="3.1"/></g><g fill="#27a385"><circle cx="721.5" cy="358.0" r="3.1"/><circle cx="747.4" cy="277.8" r="3.1"/><circle cx="773.3" cy="261.0" r="3.1"/><circle cx="799.1" cy="250.7" r="3.1"/><circle cx="825.0" cy="245.6" r="3.1"/><circle cx="850.9" cy="239.3" r="3.1"/><circle cx="876.8" cy="235.6" r="3.1"/><circle cx="902.7" cy="233.3" r="3.1"/><circle cx="928.5" cy="231.8" r="3.1"/><circle cx="954.4" cy="229.6" r="3.1"/></g><g fill="#8c1239"><circle cx="721.5" cy="348.9" r="3.1"/><circle cx="747.4" cy="272.2" r="3.1"/><circle cx="773.3" cy="256.0" r="3.1"/><circle cx="799.1" cy="247.1" r="3.1"/><circle cx="825.0" cy="240.4" r="3.1"/></g><g stroke="#3f4768" stroke-width="1" fill="none"><path d="M1362.5 211V433"/><path d="M1491.9 211V433"/><path d="M1621.3 211V433"/><path d="M1750.7 211V433"/><path d="M1333 251.6H1854.4"/><path d="M1333 299.4H1854.4"/><path d="M1333 346.8H1854.4"/><path d="M1333 394.4H1854.4"/></g><clipPath id="cl641_0"><rect x="1333" y="205" width="521.4000000000001" height="234"/></clipPath><g fill="none" stroke-width="1.15" stroke-linejoin="round" clip-path="url(#cl641_0)"><polyline points="1362.5,320.0 1388.4,278.9 1414.3,264.4 1440.1,255.6 1466.0,258.2 1491.9,263.3 1517.8,249.0" stroke="#dd5e1e"/><polyline points="1362.5,345.6 1388.4,313.3 1414.3,278.4" stroke="#7ef00c"/><polyline points="1362.5,418.9 1388.4,322.2 1414.3,291.8 1440.1,292.2 1466.0,270.7 1491.9,300.0 1517.8,262.2 1543.7,265.1 1569.5,266.7 1595.4,267.3 1621.3,250.0 1647.2,244.9 1673.1,254.0 1698.9,263.3 1724.8,256.9" stroke="#cde6d5"/><polyline points="1362.5,330.0 1388.4,273.3 1414.3,258.2 1440.1,260.4 1466.0,252.2 1491.9,275.6 1517.8,252.2 1543.7,243.3 1569.5,239.6 1595.4,253.3 1621.3,238.2 1647.2,243.3 1673.1,246.2 1698.9,242.7 1724.8,240.0 1750.7,241.1 1776.6,242.2 1802.5,237.8 1828.3,231.6 1854.2,231.1" stroke="#b5d63c"/><polyline points="1362.5,321.0 1388.4,277.1 1414.3,263.3 1440.1,265.1 1466.0,259.6 1491.9,272.9 1517.8,238.9" stroke="#dd8b72"/><polyline points="1362.5,338.9 1388.4,291.6 1414.3,274.4 1440.1,258.2 1466.0,245.6 1491.9,260.0 1517.8,246.7 1543.7,233.8 1569.5,254.4 1595.4,245.6 1621.3,240.4 1647.2,237.8 1673.1,235.1 1698.9,241.1 1724.8,232.2 1750.7,240.0 1776.6,232.2 1802.5,233.8 1828.3,237.3 1854.2,228.2" stroke="#5abcbc"/><polyline points="1362.5,340.4 1388.4,288.9 1414.3,269.6 1440.1,262.2 1466.0,254.0 1491.9,259.3 1517.8,240.0 1543.7,230.0 1569.5,247.8 1595.4,240.4" stroke="#6adbb8"/><polyline points="1362.5,308.9 1388.4,284.0 1414.3,266.0 1440.1,255.1 1466.0,244.4 1491.9,278.2" stroke="#1c2d9e"/><polyline points="1362.5,321.8 1388.4,280.0 1414.3,260.0 1440.1,249.3 1466.0,253.3 1491.9,255.6 1517.8,247.8 1543.7,258.2 1569.5,239.3 1595.4,256.0" stroke="#27a385"/><polyline points="1362.5,342.2 1388.4,287.8 1414.3,275.6 1440.1,263.3 1466.0,255.6 1491.9,254.4 1517.8,254.4 1543.7,235.6 1569.5,247.8 1595.4,244.4 1621.3,239.6 1647.2,237.8 1673.1,236.7 1698.9,238.9 1724.8,239.6 1750.7,231.6 1776.6,231.1 1802.5,224.0 1828.3,221.8 1854.2,222.7" stroke="#424d24"/><polyline points="1362.5,305.1 1388.4,269.3 1414.3,261.8 1440.1,254.4 1466.0,250.0" stroke="#8c1239"/></g><g fill="#dd5e1e"><circle cx="1362.5" cy="320.0" r="3.1"/><circle cx="1388.4" cy="278.9" r="3.1"/><circle cx="1414.3" cy="264.4" r="3.1"/><circle cx="1440.1" cy="255.6" r="3.1"/><circle cx="1466.0" cy="258.2" r="3.1"/><circle cx="1491.9" cy="263.3" r="3.1"/><circle cx="1517.8" cy="249.0" r="3.1"/></g><g fill="#7ef00c"><circle cx="1362.5" cy="345.6" r="3.1"/><circle cx="1388.4" cy="313.3" r="3.1"/><circle cx="1414.3" cy="278.4" r="3.1"/></g><g fill="#cde6d5"><circle cx="1362.5" cy="418.9" r="3.1"/><circle cx="1388.4" cy="322.2" r="3.1"/><circle cx="1414.3" cy="291.8" r="3.1"/><circle cx="1440.1" cy="292.2" r="3.1"/><circle cx="1466.0" cy="270.7" r="3.1"/><circle cx="1491.9" cy="300.0" r="3.1"/><circle cx="1517.8" cy="262.2" r="3.1"/><circle cx="1543.7" cy="265.1" r="3.1"/><circle cx="1569.5" cy="266.7" r="3.1"/><circle cx="1595.4" cy="267.3" r="3.1"/><circle cx="1621.3" cy="250.0" r="3.1"/><circle cx="1647.2" cy="244.9" r="3.1"/><circle cx="1673.1" cy="254.0" r="3.1"/><circle cx="1698.9" cy="263.3" r="3.1"/><circle cx="1724.8" cy="256.9" r="3.1"/></g><g fill="#dd8b72"><circle cx="1362.5" cy="321.0" r="3.1"/><circle cx="1388.4" cy="277.1" r="3.1"/><circle cx="1414.3" cy="263.3" r="3.1"/><circle cx="1440.1" cy="265.1" r="3.1"/><circle cx="1466.0" cy="259.6" r="3.1"/><circle cx="1491.9" cy="272.9" r="3.1"/><circle cx="1517.8" cy="238.9" r="3.1"/></g><g fill="#6adbb8"><circle cx="1362.5" cy="340.4" r="3.1"/><circle cx="1388.4" cy="288.9" r="3.1"/><circle cx="1414.3" cy="269.6" r="3.1"/><circle cx="1440.1" cy="262.2" r="3.1"/><circle cx="1466.0" cy="254.0" r="3.1"/><circle cx="1491.9" cy="259.3" r="3.1"/><circle cx="1517.8" cy="240.0" r="3.1"/><circle cx="1543.7" cy="230.0" r="3.1"/><circle cx="1569.5" cy="247.8" r="3.1"/><circle cx="1595.4" cy="240.4" r="3.1"/></g><g fill="#1c2d9e"><circle cx="1362.5" cy="308.9" r="3.1"/><circle cx="1388.4" cy="284.0" r="3.1"/><circle cx="1414.3" cy="266.0" r="3.1"/><circle cx="1440.1" cy="255.1" r="3.1"/><circle cx="1466.0" cy="244.4" r="3.1"/><circle cx="1491.9" cy="278.2" r="3.1"/></g><g fill="#27a385"><circle cx="1362.5" cy="321.8" r="3.1"/><circle cx="1388.4" cy="280.0" r="3.1"/><circle cx="1414.3" cy="260.0" r="3.1"/><circle cx="1440.1" cy="249.3" r="3.1"/><circle cx="1466.0" cy="253.3" r="3.1"/><circle cx="1491.9" cy="255.6" r="3.1"/><circle cx="1517.8" cy="247.8" r="3.1"/><circle cx="1543.7" cy="258.2" r="3.1"/><circle cx="1569.5" cy="239.3" r="3.1"/><circle cx="1595.4" cy="256.0" r="3.1"/></g><g fill="#8c1239"><circle cx="1362.5" cy="305.1" r="3.1"/><circle cx="1388.4" cy="269.3" r="3.1"/><circle cx="1414.3" cy="261.8" r="3.1"/><circle cx="1440.1" cy="254.4" r="3.1"/><circle cx="1466.0" cy="250.0" r="3.1"/></g><g stroke="#3f4768" stroke-width="1" fill="none"><path d="M721.5 661V883"/><path d="M850.9 661V883"/><path d="M980.3 661V883"/><path d="M1109.7 661V883"/><path d="M692 700.7H1213.4"/><path d="M692 757.9H1213.4"/><path d="M692 815.2H1213.4"/><path d="M692 872.4H1213.4"/></g><clipPath id="cl0_450"><rect x="692" y="655" width="521.4000000000001" height="234"/></clipPath><g fill="none" stroke-width="1.15" stroke-linejoin="round" clip-path="url(#cl0_450)"><polyline points="721.5,735.6 747.4,822.2 773.3,840.0 799.1,849.3 825.0,854.9 850.9,859.3 876.8,862.2" stroke="#dd5e1e"/><polyline points="721.5,709.1 747.4,808.0 773.3,828.9" stroke="#7ef00c"/><polyline points="721.5,676.0 747.4,789.6 773.3,816.2 799.1,830.2 825.0,839.3 850.9,846.0 876.8,850.9 902.7,854.4 928.5,857.6 954.4,860.0 980.3,862.0 1006.2,864.2 1032.1,865.8 1057.9,866.4 1083.8,867.8" stroke="#cde6d5"/><polyline points="721.5,713.0 747.4,821.0 773.3,840.0 799.1,849.5 825.0,855.5 850.9,859.8 876.8,862.6 902.7,865.0 928.5,866.8 954.4,868.2 980.3,869.2 1006.2,870.0 1032.1,870.5 1057.9,870.9 1083.8,871.3 1109.7,871.5 1135.6,871.3 1161.5,871.7 1187.3,872.0 1213.2,872.1" stroke="#b5d63c"/><polyline points="721.5,723.3 747.4,820.0 773.3,838.9 799.1,848.4 825.0,854.0 850.9,858.9 876.8,862.9" stroke="#dd8b72"/><polyline points="721.5,727.0 747.4,818.0 773.3,838.0 799.1,848.0 825.0,854.0 850.9,858.5 876.8,861.5 902.7,864.0 928.5,866.0 954.4,867.5 980.3,868.7 1006.2,869.5 1032.1,870.1 1057.9,870.6 1083.8,871.0 1109.7,871.3 1135.6,871.5 1161.5,871.7 1187.3,871.9 1213.2,872.0" stroke="#5abcbc"/><polyline points="721.5,717.3 747.4,814.9 773.3,835.6 799.1,846.0 825.0,851.8 850.9,856.7 876.8,860.0 902.7,862.9 928.5,864.9 954.4,866.7" stroke="#6adbb8"/><polyline points="721.5,738.9 747.4,823.3 773.3,841.6 799.1,851.1 825.0,857.1 850.9,861.1" stroke="#1c2d9e"/><polyline points="721.5,740.7 747.4,819.3 773.3,836.2 799.1,846.0 825.0,851.8 850.9,856.7 876.8,860.0 902.7,862.2 928.5,864.4 954.4,865.6" stroke="#27a385"/><polyline points="721.5,722.0 747.4,816.0 773.3,837.0 799.1,847.0 825.0,853.0 850.9,857.5 876.8,861.0 902.7,863.5 928.5,865.5 954.4,867.0 980.3,868.3 1006.2,869.2 1032.1,869.9 1057.9,870.4 1083.8,870.8 1109.7,871.1 1135.6,871.4 1161.5,871.6 1187.3,871.8 1213.2,872.0" stroke="#424d24"/><polyline points="721.5,752.9 747.4,825.1 773.3,840.4 799.1,849.6 825.0,855.6" stroke="#8c1239"/></g><g fill="#dd5e1e"><circle cx="721.5" cy="735.6" r="3.1"/><circle cx="747.4" cy="822.2" r="3.1"/><circle cx="773.3" cy="840.0" r="3.1"/><circle cx="799.1" cy="849.3" r="3.1"/><circle cx="825.0" cy="854.9" r="3.1"/><circle cx="850.9" cy="859.3" r="3.1"/><circle cx="876.8" cy="862.2" r="3.1"/></g><g fill="#7ef00c"><circle cx="721.5" cy="709.1" r="3.1"/><circle cx="747.4" cy="808.0" r="3.1"/><circle cx="773.3" cy="828.9" r="3.1"/></g><g fill="#cde6d5"><circle cx="721.5" cy="676.0" r="3.1"/><circle cx="747.4" cy="789.6" r="3.1"/><circle cx="773.3" cy="816.2" r="3.1"/><circle cx="799.1" cy="830.2" r="3.1"/><circle cx="825.0" cy="839.3" r="3.1"/><circle cx="850.9" cy="846.0" r="3.1"/><circle cx="876.8" cy="850.9" r="3.1"/><circle cx="902.7" cy="854.4" r="3.1"/><circle cx="928.5" cy="857.6" r="3.1"/><circle cx="954.4" cy="860.0" r="3.1"/><circle cx="980.3" cy="862.0" r="3.1"/><circle cx="1006.2" cy="864.2" r="3.1"/><circle cx="1032.1" cy="865.8" r="3.1"/><circle cx="1057.9" cy="866.4" r="3.1"/><circle cx="1083.8" cy="867.8" r="3.1"/></g><g fill="#dd8b72"><circle cx="721.5" cy="723.3" r="3.1"/><circle cx="747.4" cy="820.0" r="3.1"/><circle cx="773.3" cy="838.9" r="3.1"/><circle cx="799.1" cy="848.4" r="3.1"/><circle cx="825.0" cy="854.0" r="3.1"/><circle cx="850.9" cy="858.9" r="3.1"/><circle cx="876.8" cy="862.9" r="3.1"/></g><g fill="#6adbb8"><circle cx="721.5" cy="717.3" r="3.1"/><circle cx="747.4" cy="814.9" r="3.1"/><circle cx="773.3" cy="835.6" r="3.1"/><circle cx="799.1" cy="846.0" r="3.1"/><circle cx="825.0" cy="851.8" r="3.1"/><circle cx="850.9" cy="856.7" r="3.1"/><circle cx="876.8" cy="860.0" r="3.1"/><circle cx="902.7" cy="862.9" r="3.1"/><circle cx="928.5" cy="864.9" r="3.1"/><circle cx="954.4" cy="866.7" r="3.1"/></g><g fill="#1c2d9e"><circle cx="721.5" cy="738.9" r="3.1"/><circle cx="747.4" cy="823.3" r="3.1"/><circle cx="773.3" cy="841.6" r="3.1"/><circle cx="799.1" cy="851.1" r="3.1"/><circle cx="825.0" cy="857.1" r="3.1"/><circle cx="850.9" cy="861.1" r="3.1"/></g><g fill="#27a385"><circle cx="721.5" cy="740.7" r="3.1"/><circle cx="747.4" cy="819.3" r="3.1"/><circle cx="773.3" cy="836.2" r="3.1"/><circle cx="799.1" cy="846.0" r="3.1"/><circle cx="825.0" cy="851.8" r="3.1"/><circle cx="850.9" cy="856.7" r="3.1"/><circle cx="876.8" cy="860.0" r="3.1"/><circle cx="902.7" cy="862.2" r="3.1"/><circle cx="928.5" cy="864.4" r="3.1"/><circle cx="954.4" cy="865.6" r="3.1"/></g><g fill="#8c1239"><circle cx="721.5" cy="752.9" r="3.1"/><circle cx="747.4" cy="825.1" r="3.1"/><circle cx="773.3" cy="840.4" r="3.1"/><circle cx="799.1" cy="849.6" r="3.1"/><circle cx="825.0" cy="855.6" r="3.1"/></g><g stroke="#3f4768" stroke-width="1" fill="none"><path d="M1362.5 661V883"/><path d="M1491.9 661V883"/><path d="M1621.3 661V883"/><path d="M1750.7 661V883"/><path d="M1333 727.3H1854.4"/><path d="M1333 804.3H1854.4"/><path d="M1333 882.4H1854.4"/></g><clipPath id="cl641_450"><rect x="1333" y="655" width="521.4000000000001" height="234"/></clipPath><g fill="none" stroke-width="1.15" stroke-linejoin="round" clip-path="url(#cl641_450)"><polyline points="1362.5,797.8 1388.4,831.8 1414.3,842.9 1440.1,842.9 1466.0,846.7 1491.9,818.9 1517.8,833.1" stroke="#dd5e1e"/><polyline points="1362.5,761.1 1388.4,798.9 1414.3,834.4" stroke="#7ef00c"/><polyline points="1362.5,676.0 1388.4,772.9 1414.3,811.8 1440.1,817.1 1466.0,838.9 1491.9,813.3 1517.8,840.0 1543.7,836.2 1569.5,837.1 1595.4,820.4 1621.3,847.1 1647.2,847.3 1673.1,832.7 1698.9,808.7 1724.8,820.4" stroke="#cde6d5"/><polyline points="1362.5,761.1 1388.4,838.9 1414.3,846.7 1440.1,842.2 1466.0,847.8 1491.9,788.2 1517.8,816.2 1543.7,833.3 1569.5,823.3 1595.4,802.2 1621.3,817.8 1647.2,802.9 1673.1,785.6 1698.9,788.9 1724.8,772.2 1750.7,772.2 1776.6,767.8 1802.5,764.9 1828.3,784.0 1854.2,783.3" stroke="#b5d63c"/><polyline points="1362.5,799.3 1388.4,832.7 1414.3,847.8 1440.1,848.4 1466.0,848.9 1491.9,817.8 1517.8,860.0" stroke="#dd8b72"/><polyline points="1362.5,762.2 1388.4,817.8 1414.3,834.4 1440.1,855.6 1466.0,864.4 1491.9,821.1 1517.8,851.1 1543.7,864.4 1569.5,824.4 1595.4,834.4 1621.3,840.4 1647.2,840.0 1673.1,838.4 1698.9,834.0 1724.8,833.6 1750.7,825.6 1776.6,828.4 1802.5,816.7 1828.3,813.3 1854.2,828.2" stroke="#5abcbc"/><polyline points="1362.5,775.1 1388.4,820.4 1414.3,845.6 1440.1,851.1 1466.0,857.3 1491.9,837.8 1517.8,857.8 1543.7,868.9 1569.5,852.7 1595.4,846.7" stroke="#6adbb8"/><polyline points="1362.5,805.1 1388.4,830.0 1414.3,841.1 1440.1,846.0 1466.0,853.8 1491.9,802.2" stroke="#1c2d9e"/><polyline points="1362.5,789.6 1388.4,828.4 1414.3,846.0 1440.1,854.9 1466.0,842.7 1491.9,832.9 1517.8,838.4 1543.7,828.2 1569.5,831.1 1595.4,797.6" stroke="#27a385"/><polyline points="1362.5,763.3 1388.4,825.6 1414.3,834.4 1440.1,853.3 1466.0,856.7 1491.9,847.8 1517.8,838.9 1543.7,864.4 1569.5,843.3 1595.4,842.2 1621.3,848.9 1647.2,840.7 1673.1,838.9 1698.9,825.6 1724.8,817.1 1750.7,820.0 1776.6,820.7 1802.5,837.3 1828.3,837.3 1854.2,837.3" stroke="#424d24"/><polyline points="1362.5,809.1 1388.4,836.2 1414.3,839.6 1440.1,838.4 1466.0,838.0" stroke="#8c1239"/></g><g fill="#dd5e1e"><circle cx="1362.5" cy="797.8" r="3.1"/><circle cx="1388.4" cy="831.8" r="3.1"/><circle cx="1414.3" cy="842.9" r="3.1"/><circle cx="1440.1" cy="842.9" r="3.1"/><circle cx="1466.0" cy="846.7" r="3.1"/><circle cx="1491.9" cy="818.9" r="3.1"/><circle cx="1517.8" cy="833.1" r="3.1"/></g><g fill="#7ef00c"><circle cx="1362.5" cy="761.1" r="3.1"/><circle cx="1388.4" cy="798.9" r="3.1"/><circle cx="1414.3" cy="834.4" r="3.1"/></g><g fill="#cde6d5"><circle cx="1362.5" cy="676.0" r="3.1"/><circle cx="1388.4" cy="772.9" r="3.1"/><circle cx="1414.3" cy="811.8" r="3.1"/><circle cx="1440.1" cy="817.1" r="3.1"/><circle cx="1466.0" cy="838.9" r="3.1"/><circle cx="1491.9" cy="813.3" r="3.1"/><circle cx="1517.8" cy="840.0" r="3.1"/><circle cx="1543.7" cy="836.2" r="3.1"/><circle cx="1569.5" cy="837.1" r="3.1"/><circle cx="1595.4" cy="820.4" r="3.1"/><circle cx="1621.3" cy="847.1" r="3.1"/><circle cx="1647.2" cy="847.3" r="3.1"/><circle cx="1673.1" cy="832.7" r="3.1"/><circle cx="1698.9" cy="808.7" r="3.1"/><circle cx="1724.8" cy="820.4" r="3.1"/></g><g fill="#dd8b72"><circle cx="1362.5" cy="799.3" r="3.1"/><circle cx="1388.4" cy="832.7" r="3.1"/><circle cx="1414.3" cy="847.8" r="3.1"/><circle cx="1440.1" cy="848.4" r="3.1"/><circle cx="1466.0" cy="848.9" r="3.1"/><circle cx="1491.9" cy="817.8" r="3.1"/><circle cx="1517.8" cy="860.0" r="3.1"/></g><g fill="#6adbb8"><circle cx="1362.5" cy="775.1" r="3.1"/><circle cx="1388.4" cy="820.4" r="3.1"/><circle cx="1414.3" cy="845.6" r="3.1"/><circle cx="1440.1" cy="851.1" r="3.1"/><circle cx="1466.0" cy="857.3" r="3.1"/><circle cx="1491.9" cy="837.8" r="3.1"/><circle cx="1517.8" cy="857.8" r="3.1"/><circle cx="1543.7" cy="868.9" r="3.1"/><circle cx="1569.5" cy="852.7" r="3.1"/><circle cx="1595.4" cy="846.7" r="3.1"/></g><g fill="#1c2d9e"><circle cx="1362.5" cy="805.1" r="3.1"/><circle cx="1388.4" cy="830.0" r="3.1"/><circle cx="1414.3" cy="841.1" r="3.1"/><circle cx="1440.1" cy="846.0" r="3.1"/><circle cx="1466.0" cy="853.8" r="3.1"/><circle cx="1491.9" cy="802.2" r="3.1"/></g><g fill="#27a385"><circle cx="1362.5" cy="789.6" r="3.1"/><circle cx="1388.4" cy="828.4" r="3.1"/><circle cx="1414.3" cy="846.0" r="3.1"/><circle cx="1440.1" cy="854.9" r="3.1"/><circle cx="1466.0" cy="842.7" r="3.1"/><circle cx="1491.9" cy="832.9" r="3.1"/><circle cx="1517.8" cy="838.4" r="3.1"/><circle cx="1543.7" cy="828.2" r="3.1"/><circle cx="1569.5" cy="831.1" r="3.1"/><circle cx="1595.4" cy="797.6" r="3.1"/></g><g fill="#8c1239"><circle cx="1362.5" cy="809.1" r="3.1"/><circle cx="1388.4" cy="836.2" r="3.1"/><circle cx="1414.3" cy="839.6" r="3.1"/><circle cx="1440.1" cy="838.4" r="3.1"/><circle cx="1466.0" cy="838.0" r="3.1"/></g></svg><div class="t" style="left:635.8px;width:600px;text-align:center;top:167.5px;font-size:16px;line-height:22px;color:#dfe1ea;letter-spacing:-0.044px;-webkit-text-stroke:0.25px currentColor;">epoch_accuracy / epoch_accuracy</div><div class="t" style="right:1229.5px;top:213.7px;font-size:12px;line-height:17px;color:#c3c7e6;-webkit-text-stroke:0.25px currentColor;">1</div><div class="t" style="right:1229.5px;top:253.7px;font-size:12px;line-height:17px;color:#c3c7e6;-webkit-text-stroke:0.25px currentColor;">0.98</div><div class="t" style="right:1229.5px;top:293.7px;font-size:12px;line-height:17px;color:#c3c7e6;-webkit-text-stroke:0.25px currentColor;">0.96</div><div class="t" style="right:1229.5px;top:333.7px;font-size:12px;line-height:17px;color:#c3c7e6;-webkit-text-stroke:0.25px currentColor;">0.94</div><div class="t" style="right:1229.5px;top:373.7px;font-size:12px;line-height:17px;color:#c3c7e6;-webkit-text-stroke:0.25px currentColor;">0.92</div><div class="t" style="right:1229.5px;top:413.7px;font-size:12px;line-height:17px;color:#c3c7e6;-webkit-text-stroke:0.25px currentColor;">0.9</div><div class="t" style="left:421.5px;width:600px;text-align:center;top:434.5px;font-size:12px;line-height:17px;color:#c3c7e6;-webkit-text-stroke:0.25px currentColor;">0</div><div class="t" style="left:550.9px;width:600px;text-align:center;top:434.5px;font-size:12px;line-height:17px;color:#c3c7e6;-webkit-text-stroke:0.25px currentColor;">5</div><div class="t" style="left:680.3px;width:600px;text-align:center;top:434.5px;font-size:12px;line-height:17px;color:#c3c7e6;-webkit-text-stroke:0.25px currentColor;">10</div><div class="t" style="left:809.7px;width:600px;text-align:center;top:434.5px;font-size:12px;line-height:17px;color:#c3c7e6;-webkit-text-stroke:0.25px currentColor;">15</div><div class="t" style="left:652.5px;width:600px;text-align:center;top:471.0px;font-size:14px;line-height:20px;color:#b6bde9;-webkit-text-stroke:0.25px currentColor;">Iterations</div><div class="sw" style="left:699px;top:488.7px;background:#dd5e1e"></div><div class="t" style="left:734px;top:487.8px;font-size:12px;line-height:17px;color:#dfe1ea;-webkit-text-stroke:0.25px currentColor;">PyTorch base 4</div><div class="sw" style="left:834px;top:488.7px;background:#7ef00c"></div><div class="t" style="left:869px;top:487.8px;font-size:12px;line-height:17px;color:#dfe1ea;-webkit-text-stroke:0.25px currentColor;">PyTorch base 11</div><div class="sw" style="left:969px;top:488.7px;background:#cde6d5"></div><div class="t" style="left:1004px;top:487.8px;font-size:12px;line-height:17px;color:#dfe1ea;-webkit-text-stroke:0.25px currentColor;">PyTorch base 10</div><div class="sw" style="left:699px;top:507.7px;background:#b5d63c"></div><div class="t" style="left:734px;top:506.8px;font-size:12px;line-height:17px;color:#dfe1ea;-webkit-text-stroke:0.25px currentColor;">PyTorch base 5</div><div class="sw" style="left:834px;top:507.7px;background:#dd8b72"></div><div class="t" style="left:869px;top:506.8px;font-size:12px;line-height:17px;color:#dfe1ea;-webkit-text-stroke:0.25px currentColor;">PyTorch base 12</div><div class="sw" style="left:969px;top:507.7px;background:#5abcbc"></div><div class="t" style="left:1004px;top:506.8px;font-size:12px;line-height:17px;color:#dfe1ea;-webkit-text-stroke:0.25px currentColor;">PyTorch base 6</div><div class="sw" style="left:699px;top:526.7px;background:#6adbb8"></div><div class="t" style="left:734px;top:525.8px;font-size:12px;line-height:17px;color:#dfe1ea;-webkit-text-stroke:0.25px currentColor;">PyTorch base 7</div><div class="sw" style="left:834px;top:526.7px;background:#1c2d9e"></div><div class="t" style="left:869px;top:525.8px;font-size:12px;line-height:17px;color:#dfe1ea;-webkit-text-stroke:0.25px currentColor;">PyTorch base</div><div class="sw" style="left:969px;top:526.7px;background:#27a385"></div><div class="t" style="left:1004px;top:525.8px;font-size:12px;line-height:17px;color:#dfe1ea;-webkit-text-stroke:0.25px currentColor;">PyTorch base 9</div><div class="sw" style="left:699px;top:545.7px;background:#424d24"></div><div class="t" style="left:734px;top:544.8px;font-size:12px;line-height:17px;color:#dfe1ea;-webkit-text-stroke:0.25px currentColor;">PyTorch base 3</div><div class="sw" style="left:834px;top:545.7px;background:#8c1239"></div><div class="t" style="left:869px;top:544.8px;font-size:12px;line-height:17px;color:#dfe1ea;-webkit-text-stroke:0.25px currentColor;">PyTorch base 8</div><div class="t" style="left:1276.8px;width:600px;text-align:center;top:167.5px;font-size:16px;line-height:22px;color:#dfe1ea;letter-spacing:-0.032px;-webkit-text-stroke:0.25px currentColor;">epoch_accuracy / validation: epoch_accuracy</div><div class="t" style="right:588.5px;top:243.1px;font-size:12px;line-height:17px;color:#c3c7e6;-webkit-text-stroke:0.25px currentColor;">0.98</div><div class="t" style="right:588.5px;top:290.9px;font-size:12px;line-height:17px;color:#c3c7e6;-webkit-text-stroke:0.25px currentColor;">0.97</div><div class="t" style="right:588.5px;top:338.3px;font-size:12px;line-height:17px;color:#c3c7e6;-webkit-text-stroke:0.25px currentColor;">0.96</div><div class="t" style="right:588.5px;top:385.9px;font-size:12px;line-height:17px;color:#c3c7e6;-webkit-text-stroke:0.25px currentColor;">0.95</div><div class="t" style="left:1062.5px;width:600px;text-align:center;top:434.5px;font-size:12px;line-height:17px;color:#c3c7e6;-webkit-text-stroke:0.25px currentColor;">0</div><div class="t" style="left:1191.9px;width:600px;text-align:center;top:434.5px;font-size:12px;line-height:17px;color:#c3c7e6;-webkit-text-stroke:0.25px currentColor;">5</div><div class="t" style="left:1321.3px;width:600px;text-align:center;top:434.5px;font-size:12px;line-height:17px;color:#c3c7e6;-webkit-text-stroke:0.25px currentColor;">10</div><div class="t" style="left:1450.7px;width:600px;text-align:center;top:434.5px;font-size:12px;line-height:17px;color:#c3c7e6;-webkit-text-stroke:0.25px currentColor;">15</div><div class="t" style="left:1293.5px;width:600px;text-align:center;top:471.0px;font-size:14px;line-height:20px;color:#b6bde9;-webkit-text-stroke:0.25px currentColor;">Iterations</div><div class="sw" style="left:1340px;top:488.7px;background:#dd5e1e"></div><div class="t" style="left:1375px;top:487.8px;font-size:12px;line-height:17px;color:#dfe1ea;-webkit-text-stroke:0.25px currentColor;">PyTorch base 4</div><div class="sw" style="left:1475px;top:488.7px;background:#7ef00c"></div><div class="t" style="left:1510px;top:487.8px;font-size:12px;line-height:17px;color:#dfe1ea;-webkit-text-stroke:0.25px currentColor;">PyTorch base 11</div><div class="sw" style="left:1610px;top:488.7px;background:#cde6d5"></div><div class="t" style="left:1645px;top:487.8px;font-size:12px;line-height:17px;color:#dfe1ea;-webkit-text-stroke:0.25px currentColor;">PyTorch base 10</div><div class="sw" style="left:1340px;top:507.7px;background:#b5d63c"></div><div class="t" style="left:1375px;top:506.8px;font-size:12px;line-height:17px;color:#dfe1ea;-webkit-text-stroke:0.25px currentColor;">PyTorch base 5</div><div class="sw" style="left:1475px;top:507.7px;background:#dd8b72"></div><div class="t" style="left:1510px;top:506.8px;font-size:12px;line-height:17px;color:#dfe1ea;-webkit-text-stroke:0.25px currentColor;">PyTorch base 12</div><div class="sw" style="left:1610px;top:507.7px;background:#5abcbc"></div><div class="t" style="left:1645px;top:506.8px;font-size:12px;line-height:17px;color:#dfe1ea;-webkit-text-stroke:0.25px currentColor;">PyTorch base 6</div><div class="sw" style="left:1340px;top:526.7px;background:#6adbb8"></div><div class="t" style="left:1375px;top:525.8px;font-size:12px;line-height:17px;color:#dfe1ea;-webkit-text-stroke:0.25px currentColor;">PyTorch base 7</div><div class="sw" style="left:1475px;top:526.7px;background:#1c2d9e"></div><div class="t" style="left:1510px;top:525.8px;font-size:12px;line-height:17px;color:#dfe1ea;-webkit-text-stroke:0.25px currentColor;">PyTorch base</div><div class="sw" style="left:1610px;top:526.7px;background:#27a385"></div><div class="t" style="left:1645px;top:525.8px;font-size:12px;line-height:17px;color:#dfe1ea;-webkit-text-stroke:0.25px currentColor;">PyTorch base 9</div><div class="sw" style="left:1340px;top:545.7px;background:#424d24"></div><div class="t" style="left:1375px;top:544.8px;font-size:12px;line-height:17px;color:#dfe1ea;-webkit-text-stroke:0.25px currentColor;">PyTorch base 3</div><div class="sw" style="left:1475px;top:545.7px;background:#8c1239"></div><div class="t" style="left:1510px;top:544.8px;font-size:12px;line-height:17px;color:#dfe1ea;-webkit-text-stroke:0.25px currentColor;">PyTorch base 8</div><div class="t" style="left:635.8px;width:600px;text-align:center;top:617.5px;font-size:16px;line-height:22px;color:#dfe1ea;letter-spacing:0.012px;-webkit-text-stroke:0.25px currentColor;">epoch_loss / epoch_loss</div><div class="t" style="right:1229.5px;top:692.2px;font-size:12px;line-height:17px;color:#c3c7e6;-webkit-text-stroke:0.25px currentColor;">0.3</div><div class="t" style="right:1229.5px;top:749.4px;font-size:12px;line-height:17px;color:#c3c7e6;-webkit-text-stroke:0.25px currentColor;">0.2</div><div class="t" style="right:1229.5px;top:806.7px;font-size:12px;line-height:17px;color:#c3c7e6;-webkit-text-stroke:0.25px currentColor;">0.1</div><div class="t" style="right:1229.5px;top:863.9px;font-size:12px;line-height:17px;color:#c3c7e6;-webkit-text-stroke:0.25px currentColor;">0</div><div class="t" style="left:421.5px;width:600px;text-align:center;top:884.5px;font-size:12px;line-height:17px;color:#c3c7e6;-webkit-text-stroke:0.25px currentColor;">0</div><div class="t" style="left:550.9px;width:600px;text-align:center;top:884.5px;font-size:12px;line-height:17px;color:#c3c7e6;-webkit-text-stroke:0.25px currentColor;">5</div><div class="t" style="left:680.3px;width:600px;text-align:center;top:884.5px;font-size:12px;line-height:17px;color:#c3c7e6;-webkit-text-stroke:0.25px currentColor;">10</div><div class="t" style="left:809.7px;width:600px;text-align:center;top:884.5px;font-size:12px;line-height:17px;color:#c3c7e6;-webkit-text-stroke:0.25px currentColor;">15</div><div class="t" style="left:652.5px;width:600px;text-align:center;top:921.0px;font-size:14px;line-height:20px;color:#b6bde9;-webkit-text-stroke:0.25px currentColor;">Iterations</div><div class="sw" style="left:699px;top:938.7px;background:#dd5e1e"></div><div class="t" style="left:734px;top:937.8px;font-size:12px;line-height:17px;color:#dfe1ea;-webkit-text-stroke:0.25px currentColor;">PyTorch base 4</div><div class="sw" style="left:834px;top:938.7px;background:#7ef00c"></div><div class="t" style="left:869px;top:937.8px;font-size:12px;line-height:17px;color:#dfe1ea;-webkit-text-stroke:0.25px currentColor;">PyTorch base 11</div><div class="sw" style="left:969px;top:938.7px;background:#cde6d5"></div><div class="t" style="left:1004px;top:937.8px;font-size:12px;line-height:17px;color:#dfe1ea;-webkit-text-stroke:0.25px currentColor;">PyTorch base 10</div><div class="sw" style="left:699px;top:957.7px;background:#b5d63c"></div><div class="t" style="left:734px;top:956.8px;font-size:12px;line-height:17px;color:#dfe1ea;-webkit-text-stroke:0.25px currentColor;">PyTorch base 5</div><div class="sw" style="left:834px;top:957.7px;background:#dd8b72"></div><div class="t" style="left:869px;top:956.8px;font-size:12px;line-height:17px;color:#dfe1ea;-webkit-text-stroke:0.25px currentColor;">PyTorch base 12</div><div class="sw" style="left:969px;top:957.7px;background:#5abcbc"></div><div class="t" style="left:1004px;top:956.8px;font-size:12px;line-height:17px;color:#dfe1ea;-webkit-text-stroke:0.25px currentColor;">PyTorch base 6</div><div class="sw" style="left:699px;top:976.7px;background:#6adbb8"></div><div class="t" style="left:734px;top:975.8px;font-size:12px;line-height:17px;color:#dfe1ea;-webkit-text-stroke:0.25px currentColor;">PyTorch base 7</div><div class="sw" style="left:834px;top:976.7px;background:#1c2d9e"></div><div class="t" style="left:869px;top:975.8px;font-size:12px;line-height:17px;color:#dfe1ea;-webkit-text-stroke:0.25px currentColor;">PyTorch base</div><div class="sw" style="left:969px;top:976.7px;background:#27a385"></div><div class="t" style="left:1004px;top:975.8px;font-size:12px;line-height:17px;color:#dfe1ea;-webkit-text-stroke:0.25px currentColor;">PyTorch base 9</div><div class="sw" style="left:699px;top:995.7px;background:#424d24"></div><div class="t" style="left:734px;top:994.8px;font-size:12px;line-height:17px;color:#dfe1ea;-webkit-text-stroke:0.25px currentColor;">PyTorch base 3</div><div class="sw" style="left:834px;top:995.7px;background:#8c1239"></div><div class="t" style="left:869px;top:994.8px;font-size:12px;line-height:17px;color:#dfe1ea;-webkit-text-stroke:0.25px currentColor;">PyTorch base 8</div><div class="t" style="left:1276.8px;width:600px;text-align:center;top:617.5px;font-size:16px;line-height:22px;color:#dfe1ea;letter-spacing:0.008px;-webkit-text-stroke:0.25px currentColor;">epoch_loss / validation: epoch_loss</div><div class="t" style="right:588.5px;top:718.8px;font-size:12px;line-height:17px;color:#c3c7e6;-webkit-text-stroke:0.25px currentColor;">0.15</div><div class="t" style="right:588.5px;top:795.8px;font-size:12px;line-height:17px;color:#c3c7e6;-webkit-text-stroke:0.25px currentColor;">0.1</div><div class="t" style="right:588.5px;top:873.9px;font-size:12px;line-height:17px;color:#c3c7e6;-webkit-text-stroke:0.25px currentColor;">0.05</div><div class="t" style="left:1062.5px;width:600px;text-align:center;top:884.5px;font-size:12px;line-height:17px;color:#c3c7e6;-webkit-text-stroke:0.25px currentColor;">0</div><div class="t" style="left:1191.9px;width:600px;text-align:center;top:884.5px;font-size:12px;line-height:17px;color:#c3c7e6;-webkit-text-stroke:0.25px currentColor;">5</div><div class="t" style="left:1321.3px;width:600px;text-align:center;top:884.5px;font-size:12px;line-height:17px;color:#c3c7e6;-webkit-text-stroke:0.25px currentColor;">10</div><div class="t" style="left:1450.7px;width:600px;text-align:center;top:884.5px;font-size:12px;line-height:17px;color:#c3c7e6;-webkit-text-stroke:0.25px currentColor;">15</div><div class="t" style="left:1293.5px;width:600px;text-align:center;top:921.0px;font-size:14px;line-height:20px;color:#b6bde9;-webkit-text-stroke:0.25px currentColor;">Iterations</div><div class="sw" style="left:1340px;top:938.7px;background:#dd5e1e"></div><div class="t" style="left:1375px;top:937.8px;font-size:12px;line-height:17px;color:#dfe1ea;-webkit-text-stroke:0.25px currentColor;">PyTorch base 4</div><div class="sw" style="left:1475px;top:938.7px;background:#7ef00c"></div><div class="t" style="left:1510px;top:937.8px;font-size:12px;line-height:17px;color:#dfe1ea;-webkit-text-stroke:0.25px currentColor;">PyTorch base 11</div><div class="sw" style="left:1610px;top:938.7px;background:#cde6d5"></div><div class="t" style="left:1645px;top:937.8px;font-size:12px;line-height:17px;color:#dfe1ea;-webkit-text-stroke:0.25px currentColor;">PyTorch base 10</div><div class="sw" style="left:1340px;top:957.7px;background:#b5d63c"></div><div class="t" style="left:1375px;top:956.8px;font-size:12px;line-height:17px;color:#dfe1ea;-webkit-text-stroke:0.25px currentColor;">PyTorch base 5</div><div class="sw" style="left:1475px;top:957.7px;background:#dd8b72"></div><div class="t" style="left:1510px;top:956.8px;font-size:12px;line-height:17px;color:#dfe1ea;-webkit-text-stroke:0.25px currentColor;">PyTorch base 12</div><div class="sw" style="left:1610px;top:957.7px;background:#5abcbc"></div><div class="t" style="left:1645px;top:956.8px;font-size:12px;line-height:17px;color:#dfe1ea;-webkit-text-stroke:0.25px currentColor;">PyTorch base 6</div><div class="sw" style="left:1340px;top:976.7px;background:#6adbb8"></div><div class="t" style="left:1375px;top:975.8px;font-size:12px;line-height:17px;color:#dfe1ea;-webkit-text-stroke:0.25px currentColor;">PyTorch base 7</div><div class="sw" style="left:1475px;top:976.7px;background:#1c2d9e"></div><div class="t" style="left:1510px;top:975.8px;font-size:12px;line-height:17px;color:#dfe1ea;-webkit-text-stroke:0.25px currentColor;">PyTorch base</div><div class="sw" style="left:1610px;top:976.7px;background:#27a385"></div><div class="t" style="left:1645px;top:975.8px;font-size:12px;line-height:17px;color:#dfe1ea;-webkit-text-stroke:0.25px currentColor;">PyTorch base 9</div><div class="sw" style="left:1340px;top:995.7px;background:#424d24"></div><div class="t" style="left:1375px;top:994.8px;font-size:12px;line-height:17px;color:#dfe1ea;-webkit-text-stroke:0.25px currentColor;">PyTorch base 3</div><div class="sw" style="left:1475px;top:995.7px;background:#8c1239"></div><div class="t" style="left:1510px;top:994.8px;font-size:12px;line-height:17px;color:#dfe1ea;-webkit-text-stroke:0.25px currentColor;">PyTorch base 8</div>
<div class="abs" style="left:0px;top:1032px;width:1920px;height:48px;background:#1b1c1e"></div>
<div class="abs" style="left:0px;top:1032px;width:1920px;height:2px;background:#a6c8ff"></div>
<div class="t" style="left:88px;top:1048.5px;font-size:12.2px;line-height:17px;color:#a6c8ff;font-weight:700;transform-origin:0 50%;transform:scaleX(0.9300);">SHOW 12 TASKS SELECTED</div>
<div class="abs" style="left:274px;top:1039px;width:123px;height:36px;border:1px solid #8e9099;border-radius:18px;box-sizing:border-box"></div>
<svg class="abs" style="left:291.50px;top:1048.50px" width="14" height="18" viewBox="291.500 1048.500 14 18" ><circle cx="293.400" cy="1052.400" r="1.900" fill="#a6c8ff"/><circle cx="303.200" cy="1062.200" r="1.900" fill="#a6c8ff"/><path d="M293.400 1052.400v6.400a3.300 3.300 0 0 0 3.300 3.500h1.800M303.200 1062.200v-6.400a3.300 3.300 0 0 0-3.300-3.500h-1.800" stroke="#a6c8ff" stroke-width="1.500" fill="none"/><path d="M296.200 1059.300l3 3-3 3M300.400 1049.200l-3 3 3 3" stroke="#a6c8ff" stroke-width="1.500" fill="none"/></svg>
<div class="t" style="left:314.5px;top:1048.5px;font-size:12.2px;line-height:17px;color:#b0cdff;font-weight:700;transform-origin:0 50%;transform:scaleX(0.9357);">COMPARE</div>
<div class="abs" style="left:415px;top:1047px;width:1px;height:20px;background:#43506a"></div>
<div class="abs" style="left:488px;top:1047px;width:1px;height:20px;background:#43506a"></div>
<div class="abs" style="left:831px;top:1047px;width:1px;height:20px;background:#43506a"></div>
<div class="abs" style="left:904px;top:1047px;width:1px;height:20px;background:#43506a"></div>
<svg class="abs" style="left:443.00px;top:1049.00px" width="17" height="17" viewBox="0 0 14 14" ><rect x="0" y="0.500" width="14" height="3.800" rx="0.800" fill="#a6c8ff"/><path d="M1 5.200h12v6.800a1.500 1.500 0 0 1-1.500 1.500h-9a1.500 1.500 0 0 1-1.500-1.500z" fill="#a6c8ff"/><rect x="4.500" y="7.200" width="5" height="1.700" fill="#1b1c1e"/></svg>
<svg class="abs" style="left:518.75px;top:1047.95px;" width="19.5" height="19.5" viewBox="0 0 24 24" fill="#6c6f77" stroke="#6c6f77" stroke-width="0.700"><path d="M6 2v6h.01L6 8.010 10 12l-4 4 .01.010H6V22h12v-5.990h-.010L18 16l-4-4 4-3.990-.010-.010H18V2H6zm10 14.500V20H8v-3.500l4-4 4 4zm-4-5l-4-4V4h8v3.500l-4 4z"/></svg>
<svg class="abs" style="left:517.00px;top:1053.00px" width="6" height="9" viewBox="0 0 5 7" ><path d="M0 0v7l5-3.500z" fill="#6c6f77"/></svg>
<svg class="abs" style="left:568.05px;top:1046.25px;" width="21.5" height="21.5" viewBox="0 0 24 24" fill="#6c6f77" stroke="#6c6f77" stroke-width="0.500"><path d="M17.65 6.35C16.2 4.9 14.21 4 12 4c-4.42 0-7.99 3.58-7.99 8s3.57 8 7.99 8c3.73 0 6.84-2.55 7.73-6h-2.08c-.82 2.33-3.04 4-5.65 4-3.31 0-6-2.690-6-6s2.69-6 6-6c1.66 0 3.140.69 4.22 1.78L13 11h7V4l-2.35 2.35z"/></svg>
<svg class="abs" style="left:621.75px;top:1047.75px;" width="19.5" height="19.5" viewBox="0 0 24 24" fill="#a6c8ff" stroke="#a6c8ff" stroke-width="0.400"><path d="M13 3c-4.97 0-9 4.03-9 9H1l3.890 3.890.070.140L9 12H6c0-3.870 3.130-7 7-7s7 3.130 7 7-3.130 7-7 7c-1.930 0-3.680-.790-4.940-2.060l-1.420 1.420C8.270 19.990 10.510 21 13 21c4.970 0 9-4.030 9-9s-4.030-9-9-9zm-1 5v5l4.280 2.540.720-1.210-3.500-2.080V8H12z"/></svg>
<div class="abs" style="left:680.5px;top:1051.5px;width:12px;height:12px;background:#a6c8ff;border-radius:2px"></div>
<div class="abs" style="left:732.5px;top:1049px;width:17.5px;height:17px;border:1.500px solid #6c6f77;border-radius:3px;box-sizing:border-box"></div>
<div class="abs" style="left:735.5px;top:1052px;width:11.5px;height:11px;background:#5c5f66;border-radius:1px"></div>
<div class="abs" style="left:739.5px;top:1056px;width:3.5px;height:3.5px;background:#1b1c1e;border-radius:1px"></div>
<svg class="abs" style="left:786.20px;top:1047.90px;" width="17.8" height="17.8" viewBox="0 0 24 24" fill="#a6c8ff" ><path d="M19.35 10.04C18.67 6.59 15.64 4 12 4 9.11 4 6.6 5.64 5.35 8.04 2.340 8.360 0 10.910 0 14c0 3.310 2.690 6 6 6h13c2.760 0 5-2.240 5-5 0-2.640-2.050-4.780-4.650-4.960zM14 13v4h-4v-4H7l5-5 5 5h-3z"/></svg>
<svg class="abs" style="left:857.45px;top:1047.45px;transform:scaleX(1.07);" width="20.5" height="20.5" viewBox="0 0 24 24" fill="#a6c8ff" ><path d="M17.63 5.84C17.27 5.33 16.67 5 16 5L5 5.010C3.900 5.010 3 5.900 3 7v10c0 1.100.900 1.990 2 1.990L16 19c.670 0 1.270-.330 1.630-.840L22 12l-4.370-6.160z"/></svg>
<div class="abs" style="left:871.3px;top:1055.7px;width:3px;height:3px;background:#1b1c1e;border-radius:50%"></div>
<div class="abs" style="left:932.2px;top:1050px;width:7.5px;height:4px;background:#a6c8ff;border-radius:1.500px 1.500px 0 0"></div>
<div class="abs" style="left:932.2px;top:1051.7px;width:17.8px;height:13.6px;background:#a6c8ff;border-radius:2px"></div>
<svg class="abs" style="left:932.00px;top:1054.30px" width="15" height="8" viewBox="0 0 15 8" ><path d="M0 4h11.500M9 0.700l3.600 3.300L9 7.300" stroke="#1b1c1e" stroke-width="1.900" fill="none"/></svg>
</body></html>
